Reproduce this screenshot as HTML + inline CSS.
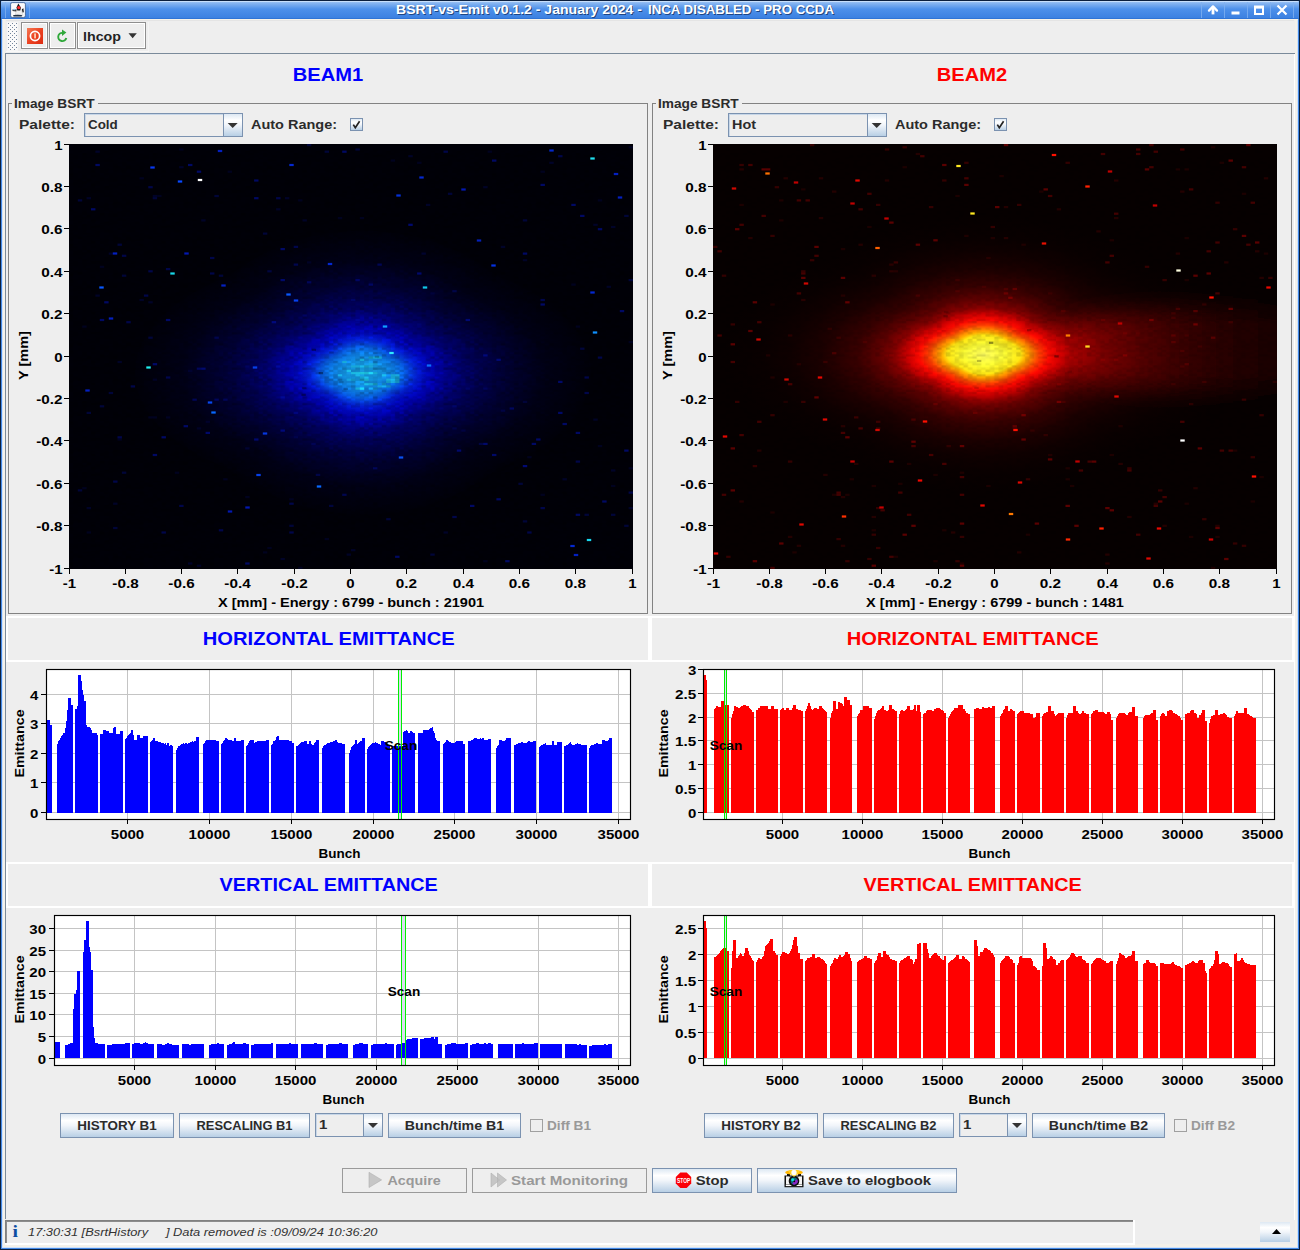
<!DOCTYPE html>
<html><head><meta charset="utf-8"><title>BSRT-vs-Emit</title><style>html,body{margin:0;padding:0;background:#eeeeee;font-family:"Liberation Sans",sans-serif;}body{width:1300px;height:1250px;position:relative;}#app{position:absolute;left:0;top:0;width:1300px;height:1250px;z-index:5;}</style></head><body><svg width="1300" height="1250" viewBox="0 0 1300 1250" font-family="'Liberation Sans', sans-serif" id="app"><defs><linearGradient id="gTitle" x1="0" y1="0" x2="0" y2="1">
<stop offset="0" stop-color="#a9cbf5"/><stop offset="0.12" stop-color="#86b5f1"/><stop offset="0.45" stop-color="#4d90ea"/><stop offset="1" stop-color="#3a7fe0"/></linearGradient><linearGradient id="gBtn" x1="0" y1="0" x2="0" y2="1">
<stop offset="0" stop-color="#dde8f3"/><stop offset="0.28" stop-color="#ffffff"/><stop offset="0.5" stop-color="#f1f5fa"/><stop offset="1" stop-color="#b8cfe5"/></linearGradient><pattern id="pGrip" x="8" y="23" width="4" height="4" patternUnits="userSpaceOnUse">
<rect x="0" y="0" width="4" height="4" fill="#fafafa"/><rect x="0" y="0" width="1" height="1" fill="#73849a"/><rect x="2" y="2" width="1" height="1" fill="#73849a"/></pattern><linearGradient id="gPow" x1="0" y1="0" x2="1" y2="1"><stop offset="0" stop-color="#f47a55"/><stop offset="0.5" stop-color="#ec4322"/><stop offset="1" stop-color="#dc2a10"/></linearGradient><radialGradient id="gCold"><stop offset="0" stop-color="#1ab4ff"/><stop offset="0.08" stop-color="#15a6ff"/>
<stop offset="0.14" stop-color="#0e8aff"/><stop offset="0.18" stop-color="#086aff"/><stop offset="0.21" stop-color="#0442fc"/>
<stop offset="0.24" stop-color="#0220f0"/><stop offset="0.28" stop-color="#0008d8"/><stop offset="0.32" stop-color="#0000c0"/><stop offset="0.43" stop-color="#000078"/>
<stop offset="0.52" stop-color="#000056"/><stop offset="0.62" stop-color="#00003a"/><stop offset="0.8" stop-color="#000018"/><stop offset="1" stop-color="#00000a"/></radialGradient><radialGradient id="gHot"><stop offset="0" stop-color="#ffff60"/><stop offset="0.08" stop-color="#ffff34"/>
<stop offset="0.14" stop-color="#ffe814"/><stop offset="0.16" stop-color="#ffb000"/><stop offset="0.19" stop-color="#ff7000"/><stop offset="0.21" stop-color="#ff4000"/>
<stop offset="0.25" stop-color="#ff0800"/><stop offset="0.29" stop-color="#d00000"/><stop offset="0.34" stop-color="#880000"/><stop offset="0.40" stop-color="#5e0000"/>
<stop offset="0.49" stop-color="#380000"/><stop offset="0.62" stop-color="#1c0000"/><stop offset="0.74" stop-color="#0f0000"/><stop offset="0.85" stop-color="#090000"/><stop offset="1" stop-color="#060000"/></radialGradient><linearGradient id="gTail" x1="0" x2="1" y1="0" y2="0"><stop offset="0" stop-color="#000"/><stop offset="0.125" stop-color="#520000"/><stop offset="0.215" stop-color="#480000"/>
<stop offset="0.32" stop-color="#3e0000"/><stop offset="0.45" stop-color="#2e0000"/><stop offset="0.6" stop-color="#200000"/><stop offset="0.74" stop-color="#150000"/><stop offset="1" stop-color="#0c0000"/></linearGradient><filter id="fBlur" x="-20%" y="-100%" width="140%" height="300%"><feGaussianBlur stdDeviation="7 11"/></filter><pattern id="pNoise" x="69" y="144" width="70.5000" height="35.4167" patternUnits="userSpaceOnUse"><g fill="#000"><rect x="0.000" y="0.000" width="4.426" height="2.234" opacity="0.05"/><rect x="4.406" y="0.000" width="4.426" height="2.234" opacity="0.07"/><rect x="8.812" y="0.000" width="4.426" height="2.234" opacity="0.14"/><rect x="17.625" y="0.000" width="4.426" height="2.234" opacity="0.11"/><rect x="22.031" y="0.000" width="4.426" height="2.234" opacity="0.03"/><rect x="39.656" y="0.000" width="4.426" height="2.234" opacity="0.07"/><rect x="44.062" y="0.000" width="4.426" height="2.234" opacity="0.11"/><rect x="48.469" y="0.000" width="4.426" height="2.234" opacity="0.03"/><rect x="52.875" y="0.000" width="4.426" height="2.234" opacity="0.09"/><rect x="57.281" y="0.000" width="4.426" height="2.234" opacity="0.14"/><rect x="66.094" y="0.000" width="4.426" height="2.234" opacity="0.03"/><rect x="4.406" y="2.214" width="4.426" height="2.234" opacity="0.03"/><rect x="8.812" y="2.214" width="4.426" height="2.234" opacity="0.09"/><rect x="13.219" y="2.214" width="4.426" height="2.234" opacity="0.05"/><rect x="22.031" y="2.214" width="4.426" height="2.234" opacity="0.09"/><rect x="39.656" y="2.214" width="4.426" height="2.234" opacity="0.11"/><rect x="61.688" y="2.214" width="4.426" height="2.234" opacity="0.03"/><rect x="66.094" y="2.214" width="4.426" height="2.234" opacity="0.03"/><rect x="8.812" y="4.427" width="4.426" height="2.234" opacity="0.05"/><rect x="13.219" y="4.427" width="4.426" height="2.234" opacity="0.07"/><rect x="17.625" y="4.427" width="4.426" height="2.234" opacity="0.03"/><rect x="22.031" y="4.427" width="4.426" height="2.234" opacity="0.14"/><rect x="26.438" y="4.427" width="4.426" height="2.234" opacity="0.03"/><rect x="35.250" y="4.427" width="4.426" height="2.234" opacity="0.03"/><rect x="39.656" y="4.427" width="4.426" height="2.234" opacity="0.09"/><rect x="44.062" y="4.427" width="4.426" height="2.234" opacity="0.05"/><rect x="52.875" y="4.427" width="4.426" height="2.234" opacity="0.07"/><rect x="57.281" y="4.427" width="4.426" height="2.234" opacity="0.09"/><rect x="0.000" y="6.641" width="4.426" height="2.234" opacity="0.05"/><rect x="8.812" y="6.641" width="4.426" height="2.234" opacity="0.07"/><rect x="13.219" y="6.641" width="4.426" height="2.234" opacity="0.05"/><rect x="22.031" y="6.641" width="4.426" height="2.234" opacity="0.07"/><rect x="30.844" y="6.641" width="4.426" height="2.234" opacity="0.05"/><rect x="35.250" y="6.641" width="4.426" height="2.234" opacity="0.07"/><rect x="39.656" y="6.641" width="4.426" height="2.234" opacity="0.05"/><rect x="44.062" y="6.641" width="4.426" height="2.234" opacity="0.11"/><rect x="48.469" y="6.641" width="4.426" height="2.234" opacity="0.07"/><rect x="57.281" y="6.641" width="4.426" height="2.234" opacity="0.11"/><rect x="61.688" y="6.641" width="4.426" height="2.234" opacity="0.11"/><rect x="4.406" y="8.854" width="4.426" height="2.234" opacity="0.05"/><rect x="13.219" y="8.854" width="4.426" height="2.234" opacity="0.07"/><rect x="17.625" y="8.854" width="4.426" height="2.234" opacity="0.09"/><rect x="26.438" y="8.854" width="4.426" height="2.234" opacity="0.14"/><rect x="30.844" y="8.854" width="4.426" height="2.234" opacity="0.09"/><rect x="35.250" y="8.854" width="4.426" height="2.234" opacity="0.07"/><rect x="39.656" y="8.854" width="4.426" height="2.234" opacity="0.09"/><rect x="48.469" y="8.854" width="4.426" height="2.234" opacity="0.11"/><rect x="61.688" y="8.854" width="4.426" height="2.234" opacity="0.03"/><rect x="0.000" y="11.068" width="4.426" height="2.234" opacity="0.03"/><rect x="4.406" y="11.068" width="4.426" height="2.234" opacity="0.11"/><rect x="8.812" y="11.068" width="4.426" height="2.234" opacity="0.07"/><rect x="13.219" y="11.068" width="4.426" height="2.234" opacity="0.14"/><rect x="17.625" y="11.068" width="4.426" height="2.234" opacity="0.07"/><rect x="22.031" y="11.068" width="4.426" height="2.234" opacity="0.14"/><rect x="26.438" y="11.068" width="4.426" height="2.234" opacity="0.05"/><rect x="30.844" y="11.068" width="4.426" height="2.234" opacity="0.11"/><rect x="39.656" y="11.068" width="4.426" height="2.234" opacity="0.07"/><rect x="44.062" y="11.068" width="4.426" height="2.234" opacity="0.05"/><rect x="52.875" y="11.068" width="4.426" height="2.234" opacity="0.09"/><rect x="61.688" y="11.068" width="4.426" height="2.234" opacity="0.03"/><rect x="66.094" y="11.068" width="4.426" height="2.234" opacity="0.07"/><rect x="0.000" y="13.281" width="4.426" height="2.234" opacity="0.14"/><rect x="4.406" y="13.281" width="4.426" height="2.234" opacity="0.07"/><rect x="13.219" y="13.281" width="4.426" height="2.234" opacity="0.07"/><rect x="17.625" y="13.281" width="4.426" height="2.234" opacity="0.05"/><rect x="22.031" y="13.281" width="4.426" height="2.234" opacity="0.14"/><rect x="30.844" y="13.281" width="4.426" height="2.234" opacity="0.05"/><rect x="35.250" y="13.281" width="4.426" height="2.234" opacity="0.07"/><rect x="39.656" y="13.281" width="4.426" height="2.234" opacity="0.05"/><rect x="57.281" y="13.281" width="4.426" height="2.234" opacity="0.05"/><rect x="61.688" y="13.281" width="4.426" height="2.234" opacity="0.11"/><rect x="8.812" y="15.495" width="4.426" height="2.234" opacity="0.14"/><rect x="13.219" y="15.495" width="4.426" height="2.234" opacity="0.09"/><rect x="22.031" y="15.495" width="4.426" height="2.234" opacity="0.03"/><rect x="26.438" y="15.495" width="4.426" height="2.234" opacity="0.07"/><rect x="30.844" y="15.495" width="4.426" height="2.234" opacity="0.05"/><rect x="35.250" y="15.495" width="4.426" height="2.234" opacity="0.11"/><rect x="39.656" y="15.495" width="4.426" height="2.234" opacity="0.09"/><rect x="57.281" y="15.495" width="4.426" height="2.234" opacity="0.11"/><rect x="61.688" y="15.495" width="4.426" height="2.234" opacity="0.07"/><rect x="66.094" y="15.495" width="4.426" height="2.234" opacity="0.03"/><rect x="8.812" y="17.708" width="4.426" height="2.234" opacity="0.09"/><rect x="22.031" y="17.708" width="4.426" height="2.234" opacity="0.09"/><rect x="26.438" y="17.708" width="4.426" height="2.234" opacity="0.07"/><rect x="39.656" y="17.708" width="4.426" height="2.234" opacity="0.09"/><rect x="44.062" y="17.708" width="4.426" height="2.234" opacity="0.05"/><rect x="52.875" y="17.708" width="4.426" height="2.234" opacity="0.11"/><rect x="61.688" y="17.708" width="4.426" height="2.234" opacity="0.14"/><rect x="66.094" y="17.708" width="4.426" height="2.234" opacity="0.11"/><rect x="0.000" y="19.922" width="4.426" height="2.234" opacity="0.11"/><rect x="4.406" y="19.922" width="4.426" height="2.234" opacity="0.07"/><rect x="8.812" y="19.922" width="4.426" height="2.234" opacity="0.11"/><rect x="13.219" y="19.922" width="4.426" height="2.234" opacity="0.05"/><rect x="17.625" y="19.922" width="4.426" height="2.234" opacity="0.05"/><rect x="22.031" y="19.922" width="4.426" height="2.234" opacity="0.11"/><rect x="26.438" y="19.922" width="4.426" height="2.234" opacity="0.09"/><rect x="39.656" y="19.922" width="4.426" height="2.234" opacity="0.09"/><rect x="44.062" y="19.922" width="4.426" height="2.234" opacity="0.14"/><rect x="52.875" y="19.922" width="4.426" height="2.234" opacity="0.11"/><rect x="57.281" y="19.922" width="4.426" height="2.234" opacity="0.07"/><rect x="0.000" y="22.135" width="4.426" height="2.234" opacity="0.11"/><rect x="4.406" y="22.135" width="4.426" height="2.234" opacity="0.05"/><rect x="8.812" y="22.135" width="4.426" height="2.234" opacity="0.14"/><rect x="13.219" y="22.135" width="4.426" height="2.234" opacity="0.14"/><rect x="17.625" y="22.135" width="4.426" height="2.234" opacity="0.14"/><rect x="22.031" y="22.135" width="4.426" height="2.234" opacity="0.07"/><rect x="30.844" y="22.135" width="4.426" height="2.234" opacity="0.07"/><rect x="39.656" y="22.135" width="4.426" height="2.234" opacity="0.05"/><rect x="44.062" y="22.135" width="4.426" height="2.234" opacity="0.07"/><rect x="48.469" y="22.135" width="4.426" height="2.234" opacity="0.14"/><rect x="52.875" y="22.135" width="4.426" height="2.234" opacity="0.05"/><rect x="57.281" y="22.135" width="4.426" height="2.234" opacity="0.11"/><rect x="61.688" y="22.135" width="4.426" height="2.234" opacity="0.05"/><rect x="66.094" y="22.135" width="4.426" height="2.234" opacity="0.05"/><rect x="0.000" y="24.349" width="4.426" height="2.234" opacity="0.07"/><rect x="13.219" y="24.349" width="4.426" height="2.234" opacity="0.11"/><rect x="17.625" y="24.349" width="4.426" height="2.234" opacity="0.14"/><rect x="22.031" y="24.349" width="4.426" height="2.234" opacity="0.05"/><rect x="26.438" y="24.349" width="4.426" height="2.234" opacity="0.07"/><rect x="30.844" y="24.349" width="4.426" height="2.234" opacity="0.05"/><rect x="35.250" y="24.349" width="4.426" height="2.234" opacity="0.11"/><rect x="39.656" y="24.349" width="4.426" height="2.234" opacity="0.05"/><rect x="44.062" y="24.349" width="4.426" height="2.234" opacity="0.14"/><rect x="48.469" y="24.349" width="4.426" height="2.234" opacity="0.07"/><rect x="52.875" y="24.349" width="4.426" height="2.234" opacity="0.07"/><rect x="57.281" y="24.349" width="4.426" height="2.234" opacity="0.05"/><rect x="61.688" y="24.349" width="4.426" height="2.234" opacity="0.07"/><rect x="66.094" y="24.349" width="4.426" height="2.234" opacity="0.09"/><rect x="0.000" y="26.562" width="4.426" height="2.234" opacity="0.07"/><rect x="8.812" y="26.562" width="4.426" height="2.234" opacity="0.11"/><rect x="13.219" y="26.562" width="4.426" height="2.234" opacity="0.07"/><rect x="17.625" y="26.562" width="4.426" height="2.234" opacity="0.07"/><rect x="22.031" y="26.562" width="4.426" height="2.234" opacity="0.14"/><rect x="30.844" y="26.562" width="4.426" height="2.234" opacity="0.14"/><rect x="39.656" y="26.562" width="4.426" height="2.234" opacity="0.03"/><rect x="44.062" y="26.562" width="4.426" height="2.234" opacity="0.07"/><rect x="48.469" y="26.562" width="4.426" height="2.234" opacity="0.11"/><rect x="52.875" y="26.562" width="4.426" height="2.234" opacity="0.05"/><rect x="61.688" y="26.562" width="4.426" height="2.234" opacity="0.09"/><rect x="0.000" y="28.776" width="4.426" height="2.234" opacity="0.14"/><rect x="4.406" y="28.776" width="4.426" height="2.234" opacity="0.09"/><rect x="8.812" y="28.776" width="4.426" height="2.234" opacity="0.05"/><rect x="13.219" y="28.776" width="4.426" height="2.234" opacity="0.14"/><rect x="17.625" y="28.776" width="4.426" height="2.234" opacity="0.05"/><rect x="26.438" y="28.776" width="4.426" height="2.234" opacity="0.03"/><rect x="35.250" y="28.776" width="4.426" height="2.234" opacity="0.11"/><rect x="44.062" y="28.776" width="4.426" height="2.234" opacity="0.03"/><rect x="57.281" y="28.776" width="4.426" height="2.234" opacity="0.11"/><rect x="61.688" y="28.776" width="4.426" height="2.234" opacity="0.03"/><rect x="13.219" y="30.990" width="4.426" height="2.234" opacity="0.07"/><rect x="22.031" y="30.990" width="4.426" height="2.234" opacity="0.11"/><rect x="26.438" y="30.990" width="4.426" height="2.234" opacity="0.03"/><rect x="30.844" y="30.990" width="4.426" height="2.234" opacity="0.14"/><rect x="39.656" y="30.990" width="4.426" height="2.234" opacity="0.09"/><rect x="44.062" y="30.990" width="4.426" height="2.234" opacity="0.11"/><rect x="48.469" y="30.990" width="4.426" height="2.234" opacity="0.07"/><rect x="52.875" y="30.990" width="4.426" height="2.234" opacity="0.09"/><rect x="61.688" y="30.990" width="4.426" height="2.234" opacity="0.03"/><rect x="66.094" y="30.990" width="4.426" height="2.234" opacity="0.03"/><rect x="0.000" y="33.203" width="4.426" height="2.234" opacity="0.07"/><rect x="8.812" y="33.203" width="4.426" height="2.234" opacity="0.07"/><rect x="13.219" y="33.203" width="4.426" height="2.234" opacity="0.09"/><rect x="17.625" y="33.203" width="4.426" height="2.234" opacity="0.05"/><rect x="22.031" y="33.203" width="4.426" height="2.234" opacity="0.09"/><rect x="30.844" y="33.203" width="4.426" height="2.234" opacity="0.14"/><rect x="35.250" y="33.203" width="4.426" height="2.234" opacity="0.07"/><rect x="44.062" y="33.203" width="4.426" height="2.234" opacity="0.14"/><rect x="48.469" y="33.203" width="4.426" height="2.234" opacity="0.05"/><rect x="57.281" y="33.203" width="4.426" height="2.234" opacity="0.05"/><rect x="61.688" y="33.203" width="4.426" height="2.234" opacity="0.14"/><rect x="66.094" y="33.203" width="4.426" height="2.234" opacity="0.14"/></g></pattern><clipPath id="cL"><rect x="69" y="144" width="564" height="425"/></clipPath><clipPath id="cR"><rect x="713" y="144" width="564" height="425"/></clipPath></defs><rect x="0" y="0" width="1300" height="1250" fill="#0b1f3d" />
<rect x="1" y="1" width="1298" height="1248" fill="#4288e6" />
<rect x="2" y="19" width="1296" height="1229" fill="#cfe2fa" />
<rect x="3" y="19" width="1294" height="1228" fill="#f4f1ea" />
<rect x="5" y="20" width="1290" height="1224" fill="#eeeeee" />
<rect x="1" y="1" width="1298" height="18" fill="url(#gTitle)" />
<rect x="0" y="0" width="1300" height="1" fill="#0b1f3d" />
<rect x="2" y="1" width="1296" height="1" fill="#c8dffa" />
<rect x="1" y="18" width="1298" height="1" fill="#2f74d6" />
<rect x="2" y="19" width="1296" height="1" fill="#f6f2ea" />
<rect x="5" y="2" width="1" height="16" fill="#7fb0f0" opacity="0.8"/>
<rect x="29" y="2" width="1" height="16" fill="#7fb0f0" opacity="0.8"/>
<rect x="1201" y="2" width="1" height="16" fill="#7fb0f0" opacity="0.8"/>
<rect x="1224" y="2" width="1" height="16" fill="#7fb0f0" opacity="0.8"/>
<rect x="1247" y="2" width="1" height="16" fill="#7fb0f0" opacity="0.8"/>
<rect x="1270" y="2" width="1" height="16" fill="#7fb0f0" opacity="0.8"/>
<rect x="1293" y="2" width="1" height="16" fill="#7fb0f0" opacity="0.8"/>
<text x="397.00" y="15.00" font-size="12" font-weight="bold" fill="#1c3f7a" textLength="246.00" lengthAdjust="spacingAndGlyphs" opacity="0.9">BSRT-vs-Emit v0.1.2 - January 2024 -</text>
<text x="649.00" y="15.00" font-size="12" font-weight="bold" fill="#1c3f7a" textLength="186.00" lengthAdjust="spacingAndGlyphs" opacity="0.9">INCA DISABLED - PRO CCDA</text>
<text x="396.00" y="14.00" font-size="12" font-weight="bold" fill="#ffffff" textLength="246.00" lengthAdjust="spacingAndGlyphs" opacity="1">BSRT-vs-Emit v0.1.2 - January 2024 -</text>
<text x="648.00" y="14.00" font-size="12" font-weight="bold" fill="#ffffff" textLength="186.00" lengthAdjust="spacingAndGlyphs" opacity="1">INCA DISABLED - PRO CCDA</text>
<g transform="translate(11,3)"><rect x="-0.4" y="-0.4" width="14.8" height="14.8" rx="1.6" fill="#fbfbfb" stroke="#33598f" stroke-width="0.8"/><path d="M5.4 6.6 L10.2 6.6 L12.1 12.3 L4.3 12.3 Z" fill="#f0f0f0" stroke="#aaa" stroke-width="0.3"/><path d="M7.3 0.6 L9.9 4.4 L9.2 7.4 L6.3 7.4 L5.5 4.6 Z" fill="#151515"/><circle cx="7.8" cy="4.6" r="1.65" fill="#ff2c2c"/><path d="M10.9 6.2 L12.4 5.2 L12.8 9.2 L11.6 9.6 Z" fill="#151515"/><path d="M5.6 6.4 L1.8 5.9 L1.4 8 L5.2 8.4 Z" fill="#3a3a3a"/><ellipse cx="3.3" cy="6.5" rx="1.4" ry="0.8" fill="#8cc6fa"/><ellipse cx="6.6" cy="12.7" rx="4.6" ry="0.9" fill="#0e1e30" opacity="0.9"/></g>
<g fill="none" stroke="#fff" stroke-width="2" stroke-linecap="butt"><path d="M1213 14.4 V7.5" stroke-width="2.8"/><path d="M1209 10.6 L1213 6.4 L1217 10.6" stroke-width="2.3" stroke-linejoin="round" stroke-linecap="round"/><path d="M1231.5 13 H1239.5" stroke-width="3"/><path d="M1255 6.5 H1263 V14 H1255 Z" /><path d="M1255 7.3 H1263" stroke-width="2.6"/><path d="M1277.5 5.5 L1286.5 14.5 M1286.5 5.5 L1277.5 14.5" stroke-width="2.2"/></g>
<rect x="7" y="22" width="11" height="29" fill="#f6f6f6" />
<rect x="8" y="23" width="9" height="27" fill="url(#pGrip)" />
<rect x="6" y="20" width="1288" height="1" fill="#e4e4e4" />
<rect x="21" y="22" width="27" height="27" fill="#8e8e8e" />
<rect x="22" y="23" width="25" height="25" fill="#ffffff" />
<rect x="23" y="24" width="23" height="23" fill="#eeeeee" />
<rect x="49" y="22" width="27" height="27" fill="#8e8e8e" />
<rect x="50" y="23" width="25" height="25" fill="#ffffff" />
<rect x="51" y="24" width="23" height="23" fill="#eeeeee" />
<rect x="77" y="22" width="69" height="27" fill="#8e8e8e" />
<rect x="78" y="23" width="67" height="25" fill="#ffffff" />
<rect x="79" y="24" width="65" height="23" fill="#eeeeee" />
<rect x="6" y="51" width="143" height="1" fill="#f8f8f8" />
<rect x="148" y="22" width="1" height="29" fill="#f4f4f4" />
<rect x="27" y="28" width="16" height="16" fill="url(#gPow)" />
<circle cx="35" cy="36" r="4.6" fill="none" stroke="#fff" stroke-width="1.7"/>
<rect x="34.3" y="33.4" width="1.5" height="5" fill="#ffe9d0" />
<path d="M66.3 38 A4.1 4.1 0 1 1 62.6 32.9" fill="none" stroke="#2fa83a" stroke-width="1.9"/><path d="M62 29.6 L66.4 32.6 L62 35.9 Z" fill="#2fa83a"/>
<text x="83.00" y="41.00" font-size="13" font-weight="bold" fill="#222" textLength="38.00" lengthAdjust="spacingAndGlyphs" >lhcop</text>
<path d="M128.5 33.2 H136.8 L132.65 38.3 Z" fill="#333"/>
<rect x="5" y="53" width="1290" height="1" fill="#7a8a9a" />
<rect x="5" y="53" width="1" height="1166" fill="#7a8a9a" />
<rect x="1294" y="54" width="1" height="1166" fill="#ffffff" />
<text x="292.81" y="81.00" font-size="18" font-weight="bold" fill="#0000ff" textLength="70.38" lengthAdjust="spacingAndGlyphs" >BEAM1</text>
<text x="936.81" y="81.00" font-size="18" font-weight="bold" fill="#ff0000" textLength="70.38" lengthAdjust="spacingAndGlyphs" >BEAM2</text>
<rect x="8.5" y="103.5" width="639" height="510" fill="none" stroke="#828282"/>
<rect x="12" y="98" width="86" height="12" fill="#eeeeee" />
<text x="14.00" y="108.00" font-size="12" font-weight="bold" fill="#2b2b2b" textLength="80.65" lengthAdjust="spacingAndGlyphs" >Image BSRT</text>
<text x="19.00" y="129.00" font-size="12" font-weight="bold" fill="#2b2b2b" textLength="56.00" lengthAdjust="spacingAndGlyphs" >Palette:</text>
<rect x="84" y="113" width="159" height="24" fill="#7b92b0" />
<rect x="85" y="114" width="138" height="22" fill="#c8d7e8" />
<rect x="86" y="115" width="137" height="21" fill="#eeeeee" />
<rect x="224" y="114" width="18" height="22" fill="url(#gBtn)" />
<path d="M227.7 123 H237.7 L232.7 128 Z" fill="#333"/>
<text x="88.00" y="129.00" font-size="12" font-weight="bold" fill="#2b2b2b" textLength="29.75" lengthAdjust="spacingAndGlyphs" >Cold</text>
<text x="251.00" y="129.00" font-size="12" font-weight="bold" fill="#2b2b2b" textLength="86.00" lengthAdjust="spacingAndGlyphs" >Auto Range:</text>
<rect x="350" y="118" width="13" height="13" fill="#7b92b0" />
<rect x="351" y="119" width="11" height="11" fill="url(#gBtn)" />
<path d="M353.3 124.6 L355.3 127.6 L359.6 121.2" fill="none" stroke="#222" stroke-width="1.7"/>
<rect x="69" y="569" width="1" height="5" fill="#000" />
<text x="62.83" y="588.00" font-size="12" font-weight="bold" fill="#000" textLength="13.33" lengthAdjust="spacingAndGlyphs" >-1</text>
<rect x="64" y="568" width="5" height="1" fill="#000" />
<text x="49.17" y="573.50" font-size="12" font-weight="bold" fill="#000" textLength="13.33" lengthAdjust="spacingAndGlyphs" >-1</text>
<rect x="125" y="569" width="1" height="5" fill="#000" />
<text x="112.38" y="588.00" font-size="12" font-weight="bold" fill="#000" textLength="26.24" lengthAdjust="spacingAndGlyphs" >-0.8</text>
<rect x="64" y="525" width="5" height="1" fill="#000" />
<text x="36.26" y="530.50" font-size="12" font-weight="bold" fill="#000" textLength="26.24" lengthAdjust="spacingAndGlyphs" >-0.8</text>
<rect x="181" y="569" width="1" height="5" fill="#000" />
<text x="168.38" y="588.00" font-size="12" font-weight="bold" fill="#000" textLength="26.24" lengthAdjust="spacingAndGlyphs" >-0.6</text>
<rect x="64" y="483" width="5" height="1" fill="#000" />
<text x="36.26" y="488.50" font-size="12" font-weight="bold" fill="#000" textLength="26.24" lengthAdjust="spacingAndGlyphs" >-0.6</text>
<rect x="237" y="569" width="1" height="5" fill="#000" />
<text x="224.38" y="588.00" font-size="12" font-weight="bold" fill="#000" textLength="26.24" lengthAdjust="spacingAndGlyphs" >-0.4</text>
<rect x="64" y="440" width="5" height="1" fill="#000" />
<text x="36.26" y="445.50" font-size="12" font-weight="bold" fill="#000" textLength="26.24" lengthAdjust="spacingAndGlyphs" >-0.4</text>
<rect x="294" y="569" width="1" height="5" fill="#000" />
<text x="281.38" y="588.00" font-size="12" font-weight="bold" fill="#000" textLength="26.24" lengthAdjust="spacingAndGlyphs" >-0.2</text>
<rect x="64" y="398" width="5" height="1" fill="#000" />
<text x="36.26" y="403.50" font-size="12" font-weight="bold" fill="#000" textLength="26.24" lengthAdjust="spacingAndGlyphs" >-0.2</text>
<rect x="350" y="569" width="1" height="5" fill="#000" />
<text x="346.32" y="588.00" font-size="12" font-weight="bold" fill="#000" textLength="8.35" lengthAdjust="spacingAndGlyphs" >0</text>
<rect x="64" y="356" width="5" height="1" fill="#000" />
<text x="54.15" y="361.50" font-size="12" font-weight="bold" fill="#000" textLength="8.35" lengthAdjust="spacingAndGlyphs" >0</text>
<rect x="406" y="569" width="1" height="5" fill="#000" />
<text x="395.87" y="588.00" font-size="12" font-weight="bold" fill="#000" textLength="21.26" lengthAdjust="spacingAndGlyphs" >0.2</text>
<rect x="64" y="313" width="5" height="1" fill="#000" />
<text x="41.24" y="318.50" font-size="12" font-weight="bold" fill="#000" textLength="21.26" lengthAdjust="spacingAndGlyphs" >0.2</text>
<rect x="463" y="569" width="1" height="5" fill="#000" />
<text x="452.87" y="588.00" font-size="12" font-weight="bold" fill="#000" textLength="21.26" lengthAdjust="spacingAndGlyphs" >0.4</text>
<rect x="64" y="271" width="5" height="1" fill="#000" />
<text x="41.24" y="276.50" font-size="12" font-weight="bold" fill="#000" textLength="21.26" lengthAdjust="spacingAndGlyphs" >0.4</text>
<rect x="519" y="569" width="1" height="5" fill="#000" />
<text x="508.87" y="588.00" font-size="12" font-weight="bold" fill="#000" textLength="21.26" lengthAdjust="spacingAndGlyphs" >0.6</text>
<rect x="64" y="228" width="5" height="1" fill="#000" />
<text x="41.24" y="233.50" font-size="12" font-weight="bold" fill="#000" textLength="21.26" lengthAdjust="spacingAndGlyphs" >0.6</text>
<rect x="575" y="569" width="1" height="5" fill="#000" />
<text x="564.87" y="588.00" font-size="12" font-weight="bold" fill="#000" textLength="21.26" lengthAdjust="spacingAndGlyphs" >0.8</text>
<rect x="64" y="186" width="5" height="1" fill="#000" />
<text x="41.24" y="191.50" font-size="12" font-weight="bold" fill="#000" textLength="21.26" lengthAdjust="spacingAndGlyphs" >0.8</text>
<rect x="632" y="569" width="1" height="5" fill="#000" />
<text x="628.33" y="588.00" font-size="12" font-weight="bold" fill="#000" textLength="8.35" lengthAdjust="spacingAndGlyphs" >1</text>
<rect x="64" y="144" width="5" height="1" fill="#000" />
<text x="54.15" y="149.50" font-size="12" font-weight="bold" fill="#000" textLength="8.35" lengthAdjust="spacingAndGlyphs" >1</text>
<text x="217.96" y="607.00" font-size="12" font-weight="bold" fill="#000" textLength="266.08" lengthAdjust="spacingAndGlyphs" >X [mm] - Energy : 6799 - bunch : 21901</text>
<g transform="translate(28,355.5) rotate(-90)">
<text x="-24.42" y="0.00" font-size="12" font-weight="bold" fill="#000" textLength="48.84" lengthAdjust="spacingAndGlyphs" >Y [mm]</text>
</g>
<rect x="652.5" y="103.5" width="639" height="510" fill="none" stroke="#828282"/>
<rect x="656" y="98" width="86" height="12" fill="#eeeeee" />
<text x="658.00" y="108.00" font-size="12" font-weight="bold" fill="#2b2b2b" textLength="80.65" lengthAdjust="spacingAndGlyphs" >Image BSRT</text>
<text x="663.00" y="129.00" font-size="12" font-weight="bold" fill="#2b2b2b" textLength="56.00" lengthAdjust="spacingAndGlyphs" >Palette:</text>
<rect x="728" y="113" width="159" height="24" fill="#7b92b0" />
<rect x="729" y="114" width="138" height="22" fill="#c8d7e8" />
<rect x="730" y="115" width="137" height="21" fill="#eeeeee" />
<rect x="868" y="114" width="18" height="22" fill="url(#gBtn)" />
<path d="M871.7 123 H881.7 L876.7 128 Z" fill="#333"/>
<text x="732.00" y="129.00" font-size="12" font-weight="bold" fill="#2b2b2b" textLength="24.02" lengthAdjust="spacingAndGlyphs" >Hot</text>
<text x="895.00" y="129.00" font-size="12" font-weight="bold" fill="#2b2b2b" textLength="86.00" lengthAdjust="spacingAndGlyphs" >Auto Range:</text>
<rect x="994" y="118" width="13" height="13" fill="#7b92b0" />
<rect x="995" y="119" width="11" height="11" fill="url(#gBtn)" />
<path d="M997.3 124.6 L999.3 127.6 L1003.6 121.2" fill="none" stroke="#222" stroke-width="1.7"/>
<rect x="713" y="569" width="1" height="5" fill="#000" />
<text x="706.83" y="588.00" font-size="12" font-weight="bold" fill="#000" textLength="13.33" lengthAdjust="spacingAndGlyphs" >-1</text>
<rect x="708" y="568" width="5" height="1" fill="#000" />
<text x="693.17" y="573.50" font-size="12" font-weight="bold" fill="#000" textLength="13.33" lengthAdjust="spacingAndGlyphs" >-1</text>
<rect x="769" y="569" width="1" height="5" fill="#000" />
<text x="756.38" y="588.00" font-size="12" font-weight="bold" fill="#000" textLength="26.24" lengthAdjust="spacingAndGlyphs" >-0.8</text>
<rect x="708" y="525" width="5" height="1" fill="#000" />
<text x="680.26" y="530.50" font-size="12" font-weight="bold" fill="#000" textLength="26.24" lengthAdjust="spacingAndGlyphs" >-0.8</text>
<rect x="825" y="569" width="1" height="5" fill="#000" />
<text x="812.38" y="588.00" font-size="12" font-weight="bold" fill="#000" textLength="26.24" lengthAdjust="spacingAndGlyphs" >-0.6</text>
<rect x="708" y="483" width="5" height="1" fill="#000" />
<text x="680.26" y="488.50" font-size="12" font-weight="bold" fill="#000" textLength="26.24" lengthAdjust="spacingAndGlyphs" >-0.6</text>
<rect x="881" y="569" width="1" height="5" fill="#000" />
<text x="868.38" y="588.00" font-size="12" font-weight="bold" fill="#000" textLength="26.24" lengthAdjust="spacingAndGlyphs" >-0.4</text>
<rect x="708" y="440" width="5" height="1" fill="#000" />
<text x="680.26" y="445.50" font-size="12" font-weight="bold" fill="#000" textLength="26.24" lengthAdjust="spacingAndGlyphs" >-0.4</text>
<rect x="938" y="569" width="1" height="5" fill="#000" />
<text x="925.38" y="588.00" font-size="12" font-weight="bold" fill="#000" textLength="26.24" lengthAdjust="spacingAndGlyphs" >-0.2</text>
<rect x="708" y="398" width="5" height="1" fill="#000" />
<text x="680.26" y="403.50" font-size="12" font-weight="bold" fill="#000" textLength="26.24" lengthAdjust="spacingAndGlyphs" >-0.2</text>
<rect x="994" y="569" width="1" height="5" fill="#000" />
<text x="990.33" y="588.00" font-size="12" font-weight="bold" fill="#000" textLength="8.35" lengthAdjust="spacingAndGlyphs" >0</text>
<rect x="708" y="356" width="5" height="1" fill="#000" />
<text x="698.15" y="361.50" font-size="12" font-weight="bold" fill="#000" textLength="8.35" lengthAdjust="spacingAndGlyphs" >0</text>
<rect x="1050" y="569" width="1" height="5" fill="#000" />
<text x="1039.87" y="588.00" font-size="12" font-weight="bold" fill="#000" textLength="21.26" lengthAdjust="spacingAndGlyphs" >0.2</text>
<rect x="708" y="313" width="5" height="1" fill="#000" />
<text x="685.24" y="318.50" font-size="12" font-weight="bold" fill="#000" textLength="21.26" lengthAdjust="spacingAndGlyphs" >0.2</text>
<rect x="1107" y="569" width="1" height="5" fill="#000" />
<text x="1096.87" y="588.00" font-size="12" font-weight="bold" fill="#000" textLength="21.26" lengthAdjust="spacingAndGlyphs" >0.4</text>
<rect x="708" y="271" width="5" height="1" fill="#000" />
<text x="685.24" y="276.50" font-size="12" font-weight="bold" fill="#000" textLength="21.26" lengthAdjust="spacingAndGlyphs" >0.4</text>
<rect x="1163" y="569" width="1" height="5" fill="#000" />
<text x="1152.87" y="588.00" font-size="12" font-weight="bold" fill="#000" textLength="21.26" lengthAdjust="spacingAndGlyphs" >0.6</text>
<rect x="708" y="228" width="5" height="1" fill="#000" />
<text x="685.24" y="233.50" font-size="12" font-weight="bold" fill="#000" textLength="21.26" lengthAdjust="spacingAndGlyphs" >0.6</text>
<rect x="1219" y="569" width="1" height="5" fill="#000" />
<text x="1208.87" y="588.00" font-size="12" font-weight="bold" fill="#000" textLength="21.26" lengthAdjust="spacingAndGlyphs" >0.8</text>
<rect x="708" y="186" width="5" height="1" fill="#000" />
<text x="685.24" y="191.50" font-size="12" font-weight="bold" fill="#000" textLength="21.26" lengthAdjust="spacingAndGlyphs" >0.8</text>
<rect x="1276" y="569" width="1" height="5" fill="#000" />
<text x="1272.33" y="588.00" font-size="12" font-weight="bold" fill="#000" textLength="8.35" lengthAdjust="spacingAndGlyphs" >1</text>
<rect x="708" y="144" width="5" height="1" fill="#000" />
<text x="698.15" y="149.50" font-size="12" font-weight="bold" fill="#000" textLength="8.35" lengthAdjust="spacingAndGlyphs" >1</text>
<text x="866.13" y="607.00" font-size="12" font-weight="bold" fill="#000" textLength="257.73" lengthAdjust="spacingAndGlyphs" >X [mm] - Energy : 6799 - bunch : 1481</text>
<g transform="translate(672,355.5) rotate(-90)">
<text x="-24.42" y="0.00" font-size="12" font-weight="bold" fill="#000" textLength="48.84" lengthAdjust="spacingAndGlyphs" >Y [mm]</text>
</g>
<g clip-path="url(#cL)">
<rect x="69" y="144" width="564" height="425" fill="#000008" />
<ellipse cx="363" cy="372.5" rx="228" ry="119.3" fill="url(#gCold)"/>
<ellipse cx="363" cy="372.5" rx="182.4" ry="142" fill="url(#gCold)" style="mix-blend-mode:lighten"/>
<rect x="368.6" y="363.1" width="8.81" height="2.21" fill="#22e4ff" opacity="0.35"/>
<rect x="355.4" y="387.5" width="8.81" height="2.21" fill="#22e4ff" opacity="0.65"/>
<rect x="351.0" y="365.4" width="8.81" height="2.21" fill="#22e4ff" opacity="0.5"/>
<rect x="377.4" y="385.3" width="13.22" height="2.21" fill="#22e4ff" opacity="0.5"/>
<rect x="359.8" y="376.4" width="8.81" height="4.43" fill="#22e4ff" opacity="0.5"/>
<rect x="364.2" y="378.6" width="4.41" height="2.21" fill="#22e4ff" opacity="0.65"/>
<rect x="346.6" y="369.8" width="4.41" height="2.21" fill="#22e4ff" opacity="0.65"/>
<rect x="359.8" y="358.7" width="4.41" height="2.21" fill="#22e4ff" opacity="0.65"/>
<rect x="355.4" y="374.2" width="4.41" height="2.21" fill="#22e4ff" opacity="0.5"/>
<rect x="342.2" y="360.9" width="4.41" height="2.21" fill="#22e4ff" opacity="0.65"/>
<rect x="386.2" y="378.6" width="13.22" height="4.43" fill="#22e4ff" opacity="0.65"/>
<rect x="351.0" y="372.0" width="13.22" height="2.21" fill="#22e4ff" opacity="0.65"/>
<rect x="381.8" y="383.1" width="4.41" height="2.21" fill="#22e4ff" opacity="0.35"/>
<rect x="359.8" y="372.0" width="8.81" height="2.21" fill="#22e4ff" opacity="0.35"/>
<rect x="364.2" y="383.1" width="13.22" height="2.21" fill="#22e4ff" opacity="0.65"/>
<rect x="337.8" y="374.2" width="4.41" height="2.21" fill="#22e4ff" opacity="0.5"/>
<rect x="359.8" y="372.0" width="13.22" height="2.21" fill="#22e4ff" opacity="0.5"/>
<rect x="359.8" y="372.0" width="13.22" height="2.21" fill="#22e4ff" opacity="0.35"/>
<rect x="359.8" y="365.4" width="13.22" height="2.21" fill="#22e4ff" opacity="0.5"/>
<rect x="368.6" y="372.0" width="8.81" height="2.21" fill="#22e4ff" opacity="0.5"/>
<rect x="368.6" y="387.5" width="8.81" height="2.21" fill="#22e4ff" opacity="0.35"/>
<rect x="390.7" y="374.2" width="8.81" height="4.43" fill="#22e4ff" opacity="0.65"/>
<rect x="368.6" y="356.5" width="13.22" height="2.21" fill="#22e4ff" opacity="0.65"/>
<rect x="359.8" y="387.5" width="4.41" height="2.21" fill="#22e4ff" opacity="0.65"/>
<rect x="346.6" y="378.6" width="8.81" height="2.21" fill="#22e4ff" opacity="0.35"/>
<rect x="381.8" y="374.2" width="4.41" height="2.21" fill="#22e4ff" opacity="0.65"/>
<rect x="69" y="144" width="564" height="425" fill="url(#pNoise)"/>
<rect x="9" y="100" width="700" height="520" fill="url(#pNoise)" transform="translate(30.844,13.281)"/>
<rect x="9" y="100" width="700" height="520" fill="url(#pNoise)" transform="translate(13.219,24.349)"/>
<rect x="575.7" y="460.5" width="4.41" height="2.21" fill="#0010b0" opacity="0.4"/><rect x="575.7" y="431.8" width="4.41" height="2.21" fill="#0010b0" opacity="0.55"/><rect x="280.5" y="248.0" width="4.41" height="2.21" fill="#0010b0" opacity="0.55"/><rect x="602.2" y="500.4" width="4.41" height="2.21" fill="#0010b0" opacity="0.55"/><rect x="276.1" y="197.1" width="4.41" height="2.21" fill="#0010b0" opacity="0.4"/><rect x="408.3" y="223.7" width="4.41" height="2.21" fill="#0010b0" opacity="0.15"/><rect x="113.1" y="480.5" width="4.41" height="2.21" fill="#0010b0" opacity="0.4"/><rect x="575.7" y="513.7" width="4.41" height="2.21" fill="#0010b0" opacity="0.55"/><rect x="245.2" y="496.0" width="4.41" height="2.21" fill="#0010b0" opacity="0.15"/><rect x="139.5" y="177.2" width="4.41" height="2.21" fill="#0010b0" opacity="0.15"/><rect x="280.5" y="279.0" width="4.41" height="2.21" fill="#0010b0" opacity="0.55"/><rect x="99.8" y="405.2" width="4.41" height="2.21" fill="#0010b0" opacity="0.3"/><rect x="562.5" y="478.2" width="4.41" height="2.21" fill="#0010b0" opacity="0.2"/><rect x="329.0" y="504.8" width="4.41" height="2.21" fill="#0010b0" opacity="0.3"/><rect x="628.6" y="146.2" width="4.41" height="2.21" fill="#0010b0" opacity="0.15"/><rect x="584.5" y="513.7" width="4.41" height="2.21" fill="#0010b0" opacity="0.3"/><rect x="527.2" y="456.1" width="4.41" height="2.21" fill="#0010b0" opacity="0.15"/><rect x="355.4" y="321.1" width="4.41" height="2.21" fill="#0010b0" opacity="0.2"/><rect x="390.7" y="159.5" width="4.41" height="2.21" fill="#0010b0" opacity="0.15"/><rect x="188.0" y="369.8" width="4.41" height="2.21" fill="#0010b0" opacity="0.15"/><rect x="86.6" y="531.4" width="4.41" height="2.21" fill="#0010b0" opacity="0.15"/><rect x="306.9" y="261.3" width="4.41" height="2.21" fill="#0010b0" opacity="0.15"/><rect x="597.8" y="356.5" width="4.41" height="2.21" fill="#0010b0" opacity="0.4"/><rect x="540.5" y="183.8" width="4.41" height="2.21" fill="#0010b0" opacity="0.55"/><rect x="289.3" y="524.7" width="4.41" height="2.21" fill="#0010b0" opacity="0.3"/><rect x="447.9" y="192.7" width="4.41" height="2.21" fill="#0010b0" opacity="0.3"/><rect x="443.5" y="150.6" width="4.41" height="2.21" fill="#0010b0" opacity="0.4"/><rect x="201.2" y="219.3" width="4.41" height="2.21" fill="#0010b0" opacity="0.2"/><rect x="179.2" y="148.4" width="4.41" height="2.21" fill="#0010b0" opacity="0.15"/><rect x="593.3" y="418.5" width="4.41" height="2.21" fill="#0010b0" opacity="0.2"/><rect x="280.5" y="396.3" width="4.41" height="2.21" fill="#0010b0" opacity="0.55"/><rect x="280.5" y="557.9" width="4.41" height="2.21" fill="#0010b0" opacity="0.2"/><rect x="540.5" y="507.0" width="4.41" height="2.21" fill="#0010b0" opacity="0.4"/><rect x="196.8" y="367.6" width="4.41" height="2.21" fill="#0010b0" opacity="0.4"/><rect x="306.9" y="144.0" width="4.41" height="2.21" fill="#0010b0" opacity="0.3"/><rect x="408.3" y="155.1" width="4.41" height="2.21" fill="#0010b0" opacity="0.2"/><rect x="276.1" y="365.4" width="4.41" height="2.21" fill="#0010b0" opacity="0.55"/><rect x="179.2" y="166.1" width="4.41" height="2.21" fill="#0010b0" opacity="0.2"/><rect x="77.8" y="489.3" width="4.41" height="2.21" fill="#0010b0" opacity="0.3"/><rect x="152.7" y="194.9" width="4.41" height="2.21" fill="#0010b0" opacity="0.2"/><rect x="342.2" y="150.6" width="4.41" height="2.21" fill="#0010b0" opacity="0.55"/><rect x="483.2" y="354.3" width="4.41" height="2.21" fill="#0010b0" opacity="0.55"/><rect x="580.1" y="214.8" width="4.41" height="2.21" fill="#0010b0" opacity="0.55"/><rect x="611.0" y="469.4" width="4.41" height="2.21" fill="#0010b0" opacity="0.2"/><rect x="500.8" y="245.8" width="4.41" height="2.21" fill="#0010b0" opacity="0.2"/><rect x="417.1" y="272.4" width="4.41" height="2.21" fill="#0010b0" opacity="0.55"/><rect x="346.6" y="553.5" width="4.41" height="2.21" fill="#0010b0" opacity="0.2"/><rect x="245.2" y="562.4" width="4.41" height="2.21" fill="#0010b0" opacity="0.55"/><rect x="289.3" y="531.4" width="4.41" height="2.21" fill="#0010b0" opacity="0.4"/><rect x="611.0" y="484.9" width="4.41" height="2.21" fill="#0010b0" opacity="0.15"/><rect x="540.5" y="170.6" width="4.41" height="2.21" fill="#0010b0" opacity="0.15"/><rect x="188.0" y="163.9" width="4.41" height="2.21" fill="#0010b0" opacity="0.55"/><rect x="355.4" y="279.0" width="4.41" height="2.21" fill="#0010b0" opacity="0.4"/><rect x="619.8" y="310.0" width="4.41" height="2.21" fill="#0010b0" opacity="0.55"/><rect x="262.9" y="551.3" width="4.41" height="2.21" fill="#0010b0" opacity="0.15"/><rect x="210.0" y="272.4" width="4.41" height="2.21" fill="#0010b0" opacity="0.4"/><rect x="148.3" y="301.2" width="4.41" height="2.21" fill="#0010b0" opacity="0.2"/><rect x="298.1" y="566.8" width="4.41" height="2.21" fill="#0010b0" opacity="0.15"/><rect x="143.9" y="294.5" width="4.41" height="2.21" fill="#0010b0" opacity="0.4"/><rect x="571.3" y="283.5" width="4.41" height="2.21" fill="#0010b0" opacity="0.15"/><rect x="117.5" y="243.6" width="4.41" height="2.21" fill="#0010b0" opacity="0.3"/><rect x="483.2" y="442.8" width="4.41" height="2.21" fill="#0010b0" opacity="0.55"/><rect x="214.4" y="194.9" width="4.41" height="2.21" fill="#0010b0" opacity="0.3"/><rect x="223.2" y="398.6" width="4.41" height="2.21" fill="#0010b0" opacity="0.3"/><rect x="223.2" y="478.2" width="4.41" height="2.21" fill="#0010b0" opacity="0.15"/><rect x="86.6" y="411.8" width="4.41" height="2.21" fill="#0010b0" opacity="0.3"/><rect x="417.1" y="161.7" width="4.41" height="2.21" fill="#0010b0" opacity="0.15"/><rect x="152.7" y="416.3" width="4.41" height="2.21" fill="#0010b0" opacity="0.15"/><rect x="417.1" y="323.3" width="4.41" height="2.21" fill="#0010b0" opacity="0.2"/><rect x="148.3" y="186.1" width="4.41" height="2.21" fill="#0010b0" opacity="0.4"/><rect x="483.2" y="560.1" width="4.41" height="2.21" fill="#0010b0" opacity="0.15"/><rect x="214.4" y="336.6" width="4.41" height="2.21" fill="#0010b0" opacity="0.3"/><rect x="161.5" y="531.4" width="4.41" height="2.21" fill="#0010b0" opacity="0.4"/><rect x="152.7" y="378.6" width="4.41" height="2.21" fill="#0010b0" opacity="0.15"/><rect x="628.6" y="467.2" width="4.41" height="2.21" fill="#0010b0" opacity="0.15"/><rect x="496.4" y="358.7" width="4.41" height="2.21" fill="#0010b0" opacity="0.55"/><rect x="82.2" y="487.1" width="4.41" height="2.21" fill="#0010b0" opacity="0.15"/><rect x="157.1" y="194.9" width="4.41" height="2.21" fill="#0010b0" opacity="0.15"/><rect x="505.2" y="560.1" width="4.41" height="2.21" fill="#0010b0" opacity="0.55"/><rect x="584.5" y="391.9" width="4.41" height="2.21" fill="#0010b0" opacity="0.4"/><rect x="161.5" y="436.2" width="4.41" height="2.21" fill="#0010b0" opacity="0.55"/><rect x="99.8" y="318.9" width="4.41" height="2.21" fill="#0010b0" opacity="0.55"/><rect x="165.9" y="416.3" width="4.41" height="2.21" fill="#0010b0" opacity="0.15"/><rect x="324.6" y="538.0" width="4.41" height="2.21" fill="#0010b0" opacity="0.15"/><rect x="628.6" y="491.5" width="4.41" height="2.21" fill="#0010b0" opacity="0.4"/><rect x="355.4" y="148.4" width="4.41" height="2.21" fill="#0010b0" opacity="0.3"/><rect x="408.3" y="223.7" width="4.41" height="2.21" fill="#0010b0" opacity="0.55"/><rect x="293.7" y="436.2" width="4.41" height="2.21" fill="#0010b0" opacity="0.2"/><rect x="452.3" y="515.9" width="4.41" height="2.21" fill="#0010b0" opacity="0.4"/><rect x="628.6" y="279.0" width="4.41" height="2.21" fill="#0010b0" opacity="0.3"/><rect x="522.8" y="520.3" width="4.41" height="2.21" fill="#0010b0" opacity="0.3"/><rect x="289.3" y="502.6" width="4.41" height="2.21" fill="#0010b0" opacity="0.4"/><rect x="293.7" y="263.5" width="4.41" height="2.21" fill="#0010b0" opacity="0.4"/><rect x="315.8" y="473.8" width="4.41" height="2.21" fill="#0010b0" opacity="0.3"/><rect x="302.5" y="219.3" width="4.41" height="2.21" fill="#0010b0" opacity="0.2"/><rect x="628.6" y="341.0" width="4.41" height="2.21" fill="#0010b0" opacity="0.15"/><rect x="139.5" y="298.9" width="4.41" height="2.21" fill="#0010b0" opacity="0.2"/><rect x="192.4" y="398.6" width="4.41" height="2.21" fill="#0010b0" opacity="0.4"/><rect x="377.4" y="263.5" width="4.41" height="2.21" fill="#0010b0" opacity="0.4"/><rect x="496.4" y="498.2" width="4.41" height="2.21" fill="#0010b0" opacity="0.55"/><rect x="624.2" y="524.7" width="4.41" height="2.21" fill="#0010b0" opacity="0.3"/><rect x="575.7" y="325.5" width="4.41" height="2.21" fill="#0010b0" opacity="0.15"/><rect x="104.2" y="301.2" width="4.41" height="2.21" fill="#0010b0" opacity="0.55"/><rect x="113.1" y="526.9" width="4.41" height="2.21" fill="#0010b0" opacity="0.3"/><rect x="465.6" y="318.9" width="4.41" height="2.21" fill="#0010b0" opacity="0.55"/><rect x="86.6" y="507.0" width="4.41" height="2.21" fill="#0010b0" opacity="0.2"/><rect x="522.8" y="400.8" width="4.41" height="2.21" fill="#0010b0" opacity="0.2"/><rect x="95.4" y="294.5" width="4.41" height="2.21" fill="#0010b0" opacity="0.2"/><rect x="227.6" y="170.6" width="4.41" height="2.21" fill="#0010b0" opacity="0.15"/><rect x="571.3" y="203.8" width="4.41" height="2.21" fill="#0010b0" opacity="0.55"/><rect x="483.2" y="186.1" width="4.41" height="2.21" fill="#0010b0" opacity="0.2"/><rect x="293.7" y="411.8" width="4.41" height="2.21" fill="#0010b0" opacity="0.3"/><rect x="267.3" y="546.9" width="4.41" height="2.21" fill="#0010b0" opacity="0.15"/><rect x="597.8" y="445.0" width="4.41" height="2.21" fill="#0010b0" opacity="0.15"/><rect x="267.3" y="270.2" width="4.41" height="2.21" fill="#0010b0" opacity="0.3"/><rect x="456.8" y="449.5" width="4.41" height="2.21" fill="#0010b0" opacity="0.55"/><rect x="245.2" y="365.4" width="4.41" height="2.21" fill="#0010b0" opacity="0.2"/><rect x="165.9" y="376.4" width="4.41" height="2.21" fill="#0010b0" opacity="0.4"/><rect x="214.4" y="398.6" width="4.41" height="2.21" fill="#0010b0" opacity="0.4"/><rect x="289.3" y="498.2" width="4.41" height="2.21" fill="#0010b0" opacity="0.15"/><rect x="492.0" y="453.9" width="4.41" height="2.21" fill="#0010b0" opacity="0.55"/><rect x="452.3" y="405.2" width="4.41" height="2.21" fill="#0010b0" opacity="0.3"/><rect x="298.1" y="199.3" width="4.41" height="2.21" fill="#0010b0" opacity="0.15"/><rect x="306.9" y="281.2" width="4.41" height="2.21" fill="#0010b0" opacity="0.4"/><rect x="165.9" y="318.9" width="4.41" height="2.21" fill="#0010b0" opacity="0.55"/><rect x="430.3" y="292.3" width="4.41" height="2.21" fill="#0010b0" opacity="0.15"/><rect x="461.2" y="429.5" width="4.41" height="2.21" fill="#0010b0" opacity="0.15"/><rect x="108.7" y="391.9" width="4.41" height="2.21" fill="#0010b0" opacity="0.3"/><rect x="540.5" y="298.9" width="4.41" height="2.21" fill="#0010b0" opacity="0.4"/><rect x="99.8" y="265.7" width="4.41" height="2.21" fill="#0010b0" opacity="0.15"/><rect x="549.3" y="161.7" width="4.41" height="2.21" fill="#0010b0" opacity="0.2"/><rect x="443.5" y="531.4" width="4.41" height="2.21" fill="#0010b0" opacity="0.2"/><rect x="597.8" y="228.1" width="4.41" height="2.21" fill="#0010b0" opacity="0.55"/><rect x="562.5" y="422.9" width="4.41" height="2.21" fill="#0010b0" opacity="0.55"/><rect x="165.9" y="268.0" width="4.41" height="2.21" fill="#0010b0" opacity="0.4"/><rect x="395.1" y="555.7" width="4.41" height="2.21" fill="#0010b0" opacity="0.55"/><rect x="254.1" y="438.4" width="4.41" height="2.21" fill="#0010b0" opacity="0.55"/><rect x="355.4" y="318.9" width="4.41" height="2.21" fill="#0010b0" opacity="0.4"/><rect x="302.5" y="314.4" width="4.41" height="2.21" fill="#0010b0" opacity="0.2"/><rect x="373.0" y="467.2" width="4.41" height="2.21" fill="#0010b0" opacity="0.4"/><rect x="293.7" y="376.4" width="4.41" height="2.21" fill="#0010b0" opacity="0.55"/><rect x="196.8" y="427.3" width="4.41" height="2.21" fill="#0010b0" opacity="0.15"/><rect x="492.0" y="159.5" width="4.41" height="2.21" fill="#0010b0" opacity="0.55"/><rect x="117.5" y="436.2" width="4.41" height="2.21" fill="#0010b0" opacity="0.4"/><rect x="205.6" y="420.7" width="4.41" height="2.21" fill="#0010b0" opacity="0.15"/><rect x="254.1" y="179.4" width="4.41" height="2.21" fill="#0010b0" opacity="0.55"/><rect x="584.5" y="376.4" width="4.41" height="2.21" fill="#0010b0" opacity="0.4"/><rect x="368.6" y="283.5" width="4.41" height="2.21" fill="#0010b0" opacity="0.4"/><rect x="624.2" y="214.8" width="4.41" height="2.21" fill="#0010b0" opacity="0.3"/><rect x="558.1" y="411.8" width="4.41" height="2.21" fill="#0010b0" opacity="0.55"/><rect x="425.9" y="203.8" width="4.41" height="2.21" fill="#0010b0" opacity="0.2"/><rect x="540.5" y="493.7" width="4.41" height="2.21" fill="#0010b0" opacity="0.15"/><rect x="359.8" y="217.0" width="4.41" height="2.21" fill="#0010b0" opacity="0.15"/><rect x="108.7" y="252.5" width="4.41" height="2.21" fill="#0010b0" opacity="0.2"/><rect x="324.6" y="150.6" width="4.41" height="2.21" fill="#0010b0" opacity="0.3"/><rect x="430.3" y="553.5" width="4.41" height="2.21" fill="#0010b0" opacity="0.3"/><rect x="342.2" y="493.7" width="4.41" height="2.21" fill="#0010b0" opacity="0.4"/><rect x="183.6" y="425.1" width="4.41" height="2.21" fill="#0010b0" opacity="0.55"/><rect x="205.6" y="431.8" width="4.41" height="2.21" fill="#0010b0" opacity="0.55"/><rect x="351.0" y="549.1" width="4.41" height="2.21" fill="#0010b0" opacity="0.2"/><rect x="558.1" y="155.1" width="4.41" height="2.21" fill="#0010b0" opacity="0.4"/><rect x="531.7" y="442.8" width="4.41" height="2.21" fill="#0010b0" opacity="0.55"/><rect x="245.2" y="447.3" width="4.41" height="2.21" fill="#0010b0" opacity="0.2"/><rect x="311.3" y="442.8" width="4.41" height="2.21" fill="#0010b0" opacity="0.2"/><rect x="218.8" y="274.6" width="4.41" height="2.21" fill="#0010b0" opacity="0.3"/><rect x="271.7" y="321.1" width="4.41" height="2.21" fill="#0010b0" opacity="0.55"/><rect x="421.5" y="252.5" width="4.41" height="2.21" fill="#0010b0" opacity="0.2"/><rect x="284.9" y="197.1" width="4.41" height="2.21" fill="#0010b0" opacity="0.2"/><rect x="337.8" y="217.0" width="4.41" height="2.21" fill="#0010b0" opacity="0.15"/><rect x="558.1" y="380.8" width="4.41" height="2.21" fill="#0010b0" opacity="0.55"/><rect x="210.0" y="256.9" width="4.41" height="2.21" fill="#0010b0" opacity="0.4"/><rect x="86.6" y="197.1" width="4.41" height="2.21" fill="#0010b0" opacity="0.2"/><rect x="470.0" y="347.6" width="4.41" height="2.21" fill="#0010b0" opacity="0.15"/><rect x="452.3" y="427.3" width="4.41" height="2.21" fill="#0010b0" opacity="0.2"/><rect x="148.3" y="416.3" width="4.41" height="2.21" fill="#0010b0" opacity="0.15"/><rect x="95.4" y="163.9" width="4.41" height="2.21" fill="#0010b0" opacity="0.55"/><rect x="611.0" y="225.9" width="4.41" height="2.21" fill="#0010b0" opacity="0.2"/><rect x="276.1" y="208.2" width="4.41" height="2.21" fill="#0010b0" opacity="0.2"/><rect x="262.9" y="232.5" width="4.41" height="2.21" fill="#0010b0" opacity="0.3"/><rect x="174.8" y="471.6" width="4.41" height="2.21" fill="#0010b0" opacity="0.15"/><rect x="218.8" y="529.2" width="4.41" height="2.21" fill="#0010b0" opacity="0.4"/><rect x="152.7" y="197.1" width="4.41" height="2.21" fill="#0010b0" opacity="0.3"/><rect x="509.6" y="407.4" width="4.41" height="2.21" fill="#0010b0" opacity="0.4"/><rect x="465.6" y="387.5" width="4.41" height="2.21" fill="#0010b0" opacity="0.2"/><rect x="487.6" y="150.6" width="4.41" height="2.21" fill="#0010b0" opacity="0.15"/><rect x="293.7" y="245.8" width="4.41" height="2.21" fill="#0010b0" opacity="0.4"/><rect x="580.1" y="347.6" width="4.41" height="2.21" fill="#0010b0" opacity="0.3"/><rect x="522.8" y="252.5" width="4.41" height="2.21" fill="#0010b0" opacity="0.55"/><rect x="254.1" y="197.1" width="4.41" height="2.21" fill="#0010b0" opacity="0.55"/><rect x="82.2" y="325.5" width="4.41" height="2.21" fill="#0010b0" opacity="0.15"/><rect x="522.8" y="465.0" width="4.41" height="2.21" fill="#0010b0" opacity="0.55"/><rect x="280.5" y="429.5" width="4.41" height="2.21" fill="#0010b0" opacity="0.55"/><rect x="452.3" y="290.1" width="4.41" height="2.21" fill="#0010b0" opacity="0.3"/><rect x="196.8" y="564.6" width="4.41" height="2.21" fill="#0010b0" opacity="0.2"/><rect x="522.8" y="219.3" width="4.41" height="2.21" fill="#0010b0" opacity="0.3"/><rect x="483.2" y="387.5" width="4.41" height="2.21" fill="#0010b0" opacity="0.2"/><rect x="522.8" y="259.1" width="4.41" height="2.21" fill="#0010b0" opacity="0.2"/><rect x="148.3" y="336.6" width="4.41" height="2.21" fill="#0010b0" opacity="0.3"/><rect x="597.8" y="199.3" width="4.41" height="2.21" fill="#0010b0" opacity="0.15"/><rect x="470.0" y="504.8" width="4.41" height="2.21" fill="#0010b0" opacity="0.55"/><rect x="121.9" y="274.6" width="4.41" height="2.21" fill="#0010b0" opacity="0.3"/><rect x="403.9" y="334.4" width="4.41" height="2.21" fill="#0010b0" opacity="0.2"/><rect x="522.8" y="465.0" width="4.41" height="2.21" fill="#0010b0" opacity="0.2"/><rect x="152.7" y="363.1" width="4.41" height="2.21" fill="#0010b0" opacity="0.55"/><rect x="628.6" y="507.0" width="4.41" height="2.21" fill="#0010b0" opacity="0.2"/><rect x="201.2" y="367.6" width="4.41" height="2.21" fill="#0010b0" opacity="0.55"/><rect x="91.0" y="208.2" width="4.41" height="2.21" fill="#0010b0" opacity="0.55"/><rect x="188.0" y="562.4" width="4.41" height="2.21" fill="#0010b0" opacity="0.2"/><rect x="121.9" y="254.7" width="4.41" height="2.21" fill="#0010b0" opacity="0.4"/><rect x="77.8" y="199.3" width="4.41" height="2.21" fill="#0010b0" opacity="0.3"/><rect x="351.0" y="298.9" width="4.41" height="2.21" fill="#0010b0" opacity="0.3"/><rect x="536.1" y="438.4" width="4.41" height="2.21" fill="#0010b0" opacity="0.55"/><rect x="179.2" y="504.8" width="4.41" height="2.21" fill="#0010b0" opacity="0.4"/><rect x="152.7" y="453.9" width="4.41" height="2.21" fill="#0010b0" opacity="0.55"/><rect x="117.5" y="360.9" width="4.41" height="2.21" fill="#0010b0" opacity="0.2"/><rect x="500.8" y="409.6" width="4.41" height="2.21" fill="#0010b0" opacity="0.2"/><rect x="624.2" y="449.5" width="4.41" height="2.21" fill="#0010b0" opacity="0.55"/><rect x="130.7" y="385.3" width="4.41" height="2.21" fill="#0010b0" opacity="0.4"/><rect x="540.5" y="303.4" width="4.41" height="2.21" fill="#0010b0" opacity="0.55"/><rect x="518.4" y="482.7" width="4.41" height="2.21" fill="#0010b0" opacity="0.3"/><rect x="478.8" y="442.8" width="4.41" height="2.21" fill="#0010b0" opacity="0.3"/><rect x="611.0" y="513.7" width="4.41" height="2.21" fill="#0010b0" opacity="0.3"/><rect x="386.2" y="518.1" width="4.41" height="2.21" fill="#0010b0" opacity="0.3"/><rect x="95.4" y="150.6" width="4.41" height="2.21" fill="#0010b0" opacity="0.2"/><rect x="113.1" y="502.6" width="4.41" height="2.21" fill="#0010b0" opacity="0.2"/><rect x="527.2" y="531.4" width="4.41" height="2.21" fill="#0010b0" opacity="0.4"/><rect x="126.3" y="321.1" width="4.41" height="2.21" fill="#0010b0" opacity="0.4"/><rect x="121.9" y="471.6" width="4.41" height="2.21" fill="#0010b0" opacity="0.3"/><rect x="148.3" y="270.2" width="4.41" height="2.21" fill="#0010b0" opacity="0.4"/><rect x="606.6" y="285.7" width="4.41" height="2.21" fill="#0010b0" opacity="0.2"/><rect x="117.5" y="438.4" width="4.41" height="2.21" fill="#0010b0" opacity="0.15"/><rect x="593.3" y="223.7" width="4.41" height="2.21" fill="#0010b0" opacity="0.2"/><rect x="196.8" y="170.6" width="4.41" height="2.21" fill="#0010b0" opacity="0.55"/>
<rect x="339.2" y="381.0" width="4.41" height="2.21" fill="#000" opacity="0.15"/>
<rect x="343.5" y="387.8" width="4.41" height="2.21" fill="#000" opacity="0.25"/>
<rect x="301.9" y="386.8" width="4.41" height="2.21" fill="#000" opacity="0.25"/>
<rect x="311.6" y="348.9" width="4.41" height="2.21" fill="#000" opacity="0.4"/>
<rect x="301.4" y="393.7" width="4.41" height="2.21" fill="#000" opacity="0.4"/>
<rect x="374.7" y="355.6" width="4.41" height="2.21" fill="#000" opacity="0.25"/>
<rect x="359.2" y="348.4" width="4.41" height="2.21" fill="#000" opacity="0.15"/>
<rect x="318.7" y="372.0" width="4.41" height="2.21" fill="#000" opacity="0.4"/>
<rect x="329.2" y="351.4" width="4.41" height="2.21" fill="#000" opacity="0.25"/>
<rect x="197.8" y="178.9" width="4.41" height="2.21" fill="#ffffff"/>
<rect x="590.3" y="157.4" width="4.41" height="2.21" fill="#20e0f0"/>
<rect x="170.3" y="272.4" width="4.41" height="2.21" fill="#18d8e8"/>
<rect x="146.3" y="366.4" width="4.41" height="2.21" fill="#20f0f0"/>
<rect x="422.8" y="286.4" width="4.41" height="2.21" fill="#10c8e8"/>
<rect x="586.8" y="538.9" width="4.41" height="2.21" fill="#18d8f0"/>
<rect x="592.8" y="331.4" width="4.41" height="2.21" fill="#1090ff"/>
<rect x="177.8" y="180.4" width="4.41" height="2.21" fill="#0848ff"/>
<rect x="150.3" y="166.4" width="4.41" height="2.21" fill="#0838f0"/>
<rect x="99.3" y="286.4" width="4.41" height="2.21" fill="#0858ff"/>
<rect x="286.3" y="293.4" width="4.41" height="2.21" fill="#0858ff"/>
<rect x="293.8" y="299.4" width="4.41" height="2.21" fill="#0640f0"/>
<rect x="211.3" y="411.4" width="4.41" height="2.21" fill="#0868ff"/>
<rect x="207.8" y="401.4" width="4.41" height="2.21" fill="#0848f0"/>
<rect x="316.8" y="485.4" width="4.41" height="2.21" fill="#0868ff"/>
<rect x="398.8" y="456.4" width="4.41" height="2.21" fill="#0850f0"/>
<rect x="256.3" y="473.9" width="4.41" height="2.21" fill="#0640e8"/>
<rect x="262.8" y="432.4" width="4.41" height="2.21" fill="#0638e0"/>
<rect x="252.8" y="366.4" width="4.41" height="2.21" fill="#0640e8"/>
<rect x="491.3" y="264.4" width="4.41" height="2.21" fill="#0430e0"/>
<rect x="327.8" y="262.9" width="4.41" height="2.21" fill="#0428d0"/>
<rect x="419.3" y="176.4" width="4.41" height="2.21" fill="#0428d0"/>
<rect x="396.3" y="194.4" width="4.41" height="2.21" fill="#0430d8"/>
<rect x="217.8" y="149.9" width="4.41" height="2.21" fill="#0420c0"/>
<rect x="289.3" y="163.9" width="4.41" height="2.21" fill="#0428d0"/>
<rect x="549.3" y="149.4" width="4.41" height="2.21" fill="#0428c8"/>
<rect x="613.8" y="172.9" width="4.41" height="2.21" fill="#0420c0"/>
<rect x="617.8" y="196.4" width="4.41" height="2.21" fill="#0420c0"/>
<rect x="476.8" y="239.4" width="4.41" height="2.21" fill="#0420b8"/>
<rect x="112.8" y="252.4" width="4.41" height="2.21" fill="#0420c0"/>
<rect x="184.3" y="252.4" width="4.41" height="2.21" fill="#0318b0"/>
<rect x="221.3" y="284.4" width="4.41" height="2.21" fill="#0420c0"/>
<rect x="108.8" y="317.4" width="4.41" height="2.21" fill="#0420c0"/>
<rect x="85.3" y="389.4" width="4.41" height="2.21" fill="#0420c0"/>
<rect x="590.3" y="291.4" width="4.41" height="2.21" fill="#0428d0"/>
<rect x="382.8" y="325.4" width="4.41" height="2.21" fill="#10a0ff"/>
<rect x="389.3" y="351.9" width="4.41" height="2.21" fill="#30e8ff"/>
<rect x="426.8" y="364.4" width="4.41" height="2.21" fill="#0a70ff"/>
<rect x="570.3" y="544.9" width="4.41" height="2.21" fill="#0428d0"/>
<rect x="573.8" y="553.9" width="4.41" height="2.21" fill="#0420c0"/>
<rect x="227.8" y="510.4" width="4.41" height="2.21" fill="#0318b0"/>
<rect x="245.3" y="506.4" width="4.41" height="2.21" fill="#0318b0"/>
<rect x="461.3" y="188.4" width="4.41" height="2.21" fill="#0318b0"/>
</g>
<g clip-path="url(#cR)">
<rect x="713" y="144" width="564" height="425" fill="#060000" />
<ellipse cx="984" cy="354.5" rx="262" ry="116.8" fill="url(#gHot)"/>
<ellipse cx="984" cy="354.5" rx="209.6" ry="139" fill="url(#gHot)" style="mix-blend-mode:lighten"/>
<ellipse cx="1199" cy="349.5" rx="160" ry="42" fill="url(#gTail)" filter="url(#fBlur)" style="mix-blend-mode:screen"/>
<rect x="713" y="144" width="564" height="425" fill="url(#pNoise)"/>
<rect x="1039.1" y="190.5" width="4.41" height="2.21" fill="#a00000" opacity="0.15"/><rect x="1056.7" y="383.1" width="4.41" height="2.21" fill="#a00000" opacity="0.4"/><rect x="1114.0" y="217.0" width="4.41" height="2.21" fill="#a00000" opacity="0.2"/><rect x="1012.6" y="394.1" width="4.41" height="2.21" fill="#a00000" opacity="0.15"/><rect x="959.8" y="493.7" width="4.41" height="2.21" fill="#a00000" opacity="0.4"/><rect x="739.4" y="203.8" width="4.41" height="2.21" fill="#a00000" opacity="0.15"/><rect x="1272.6" y="380.8" width="4.41" height="2.21" fill="#a00000" opacity="0.15"/><rect x="1197.7" y="345.4" width="4.41" height="2.21" fill="#a00000" opacity="0.15"/><rect x="942.1" y="163.9" width="4.41" height="2.21" fill="#a00000" opacity="0.55"/><rect x="1127.2" y="515.9" width="4.41" height="2.21" fill="#a00000" opacity="0.2"/><rect x="955.3" y="560.1" width="4.41" height="2.21" fill="#a00000" opacity="0.3"/><rect x="1127.2" y="467.2" width="4.41" height="2.21" fill="#a00000" opacity="0.3"/><rect x="1065.5" y="467.2" width="4.41" height="2.21" fill="#a00000" opacity="0.15"/><rect x="1246.2" y="243.6" width="4.41" height="2.21" fill="#a00000" opacity="0.4"/><rect x="1215.3" y="524.7" width="4.41" height="2.21" fill="#a00000" opacity="0.2"/><rect x="915.7" y="243.6" width="4.41" height="2.21" fill="#a00000" opacity="0.55"/><rect x="1074.3" y="524.7" width="4.41" height="2.21" fill="#a00000" opacity="0.55"/><rect x="933.3" y="473.8" width="4.41" height="2.21" fill="#a00000" opacity="0.15"/><rect x="805.5" y="199.3" width="4.41" height="2.21" fill="#a00000" opacity="0.4"/><rect x="752.7" y="465.0" width="4.41" height="2.21" fill="#a00000" opacity="0.3"/><rect x="1025.8" y="478.2" width="4.41" height="2.21" fill="#a00000" opacity="0.3"/><rect x="832.0" y="352.1" width="4.41" height="2.21" fill="#a00000" opacity="0.3"/><rect x="1056.7" y="400.8" width="4.41" height="2.21" fill="#a00000" opacity="0.55"/><rect x="955.3" y="290.1" width="4.41" height="2.21" fill="#a00000" opacity="0.2"/><rect x="832.0" y="493.7" width="4.41" height="2.21" fill="#a00000" opacity="0.15"/><rect x="1268.2" y="276.8" width="4.41" height="2.21" fill="#a00000" opacity="0.3"/><rect x="871.6" y="564.6" width="4.41" height="2.21" fill="#a00000" opacity="0.55"/><rect x="823.2" y="360.9" width="4.41" height="2.21" fill="#a00000" opacity="0.2"/><rect x="1219.7" y="161.7" width="4.41" height="2.21" fill="#a00000" opacity="0.15"/><rect x="1180.1" y="365.4" width="4.41" height="2.21" fill="#a00000" opacity="0.15"/><rect x="893.7" y="270.2" width="4.41" height="2.21" fill="#a00000" opacity="0.15"/><rect x="959.8" y="562.4" width="4.41" height="2.21" fill="#a00000" opacity="0.15"/><rect x="1210.9" y="566.8" width="4.41" height="2.21" fill="#a00000" opacity="0.15"/><rect x="1100.8" y="152.9" width="4.41" height="2.21" fill="#a00000" opacity="0.4"/><rect x="1263.8" y="252.5" width="4.41" height="2.21" fill="#a00000" opacity="0.15"/><rect x="796.7" y="292.3" width="4.41" height="2.21" fill="#a00000" opacity="0.4"/><rect x="933.3" y="403.0" width="4.41" height="2.21" fill="#a00000" opacity="0.3"/><rect x="955.3" y="194.9" width="4.41" height="2.21" fill="#a00000" opacity="0.15"/><rect x="902.5" y="533.6" width="4.41" height="2.21" fill="#a00000" opacity="0.55"/><rect x="981.8" y="285.7" width="4.41" height="2.21" fill="#a00000" opacity="0.15"/><rect x="1184.5" y="237.0" width="4.41" height="2.21" fill="#a00000" opacity="0.15"/><rect x="1210.9" y="336.6" width="4.41" height="2.21" fill="#a00000" opacity="0.4"/><rect x="898.1" y="491.5" width="4.41" height="2.21" fill="#a00000" opacity="0.4"/><rect x="787.9" y="535.8" width="4.41" height="2.21" fill="#a00000" opacity="0.2"/><rect x="1043.5" y="383.1" width="4.41" height="2.21" fill="#a00000" opacity="0.4"/><rect x="1047.9" y="458.3" width="4.41" height="2.21" fill="#a00000" opacity="0.55"/><rect x="770.3" y="303.4" width="4.41" height="2.21" fill="#a00000" opacity="0.15"/><rect x="739.4" y="500.4" width="4.41" height="2.21" fill="#a00000" opacity="0.2"/><rect x="1087.5" y="460.5" width="4.41" height="2.21" fill="#a00000" opacity="0.4"/><rect x="990.6" y="237.0" width="4.41" height="2.21" fill="#a00000" opacity="0.15"/><rect x="1091.9" y="460.5" width="4.41" height="2.21" fill="#a00000" opacity="0.55"/><rect x="840.8" y="276.8" width="4.41" height="2.21" fill="#a00000" opacity="0.55"/><rect x="1241.8" y="398.6" width="4.41" height="2.21" fill="#a00000" opacity="0.3"/><rect x="717.4" y="334.4" width="4.41" height="2.21" fill="#a00000" opacity="0.4"/><rect x="739.4" y="223.7" width="4.41" height="2.21" fill="#a00000" opacity="0.4"/><rect x="942.1" y="529.2" width="4.41" height="2.21" fill="#a00000" opacity="0.15"/><rect x="906.9" y="513.7" width="4.41" height="2.21" fill="#a00000" opacity="0.4"/><rect x="1188.9" y="188.3" width="4.41" height="2.21" fill="#a00000" opacity="0.4"/><rect x="1021.4" y="414.1" width="4.41" height="2.21" fill="#a00000" opacity="0.55"/><rect x="911.3" y="440.6" width="4.41" height="2.21" fill="#a00000" opacity="0.55"/><rect x="1047.9" y="292.3" width="4.41" height="2.21" fill="#a00000" opacity="0.15"/><rect x="964.2" y="177.2" width="4.41" height="2.21" fill="#a00000" opacity="0.4"/><rect x="1136.0" y="152.9" width="4.41" height="2.21" fill="#a00000" opacity="0.4"/><rect x="1175.7" y="307.8" width="4.41" height="2.21" fill="#a00000" opacity="0.3"/><rect x="1171.2" y="341.0" width="4.41" height="2.21" fill="#a00000" opacity="0.3"/><rect x="1149.2" y="166.1" width="4.41" height="2.21" fill="#a00000" opacity="0.4"/><rect x="1250.6" y="456.1" width="4.41" height="2.21" fill="#a00000" opacity="0.3"/><rect x="1025.8" y="533.6" width="4.41" height="2.21" fill="#a00000" opacity="0.15"/><rect x="1144.8" y="265.7" width="4.41" height="2.21" fill="#a00000" opacity="0.3"/><rect x="876.0" y="427.3" width="4.41" height="2.21" fill="#a00000" opacity="0.3"/><rect x="836.4" y="493.7" width="4.41" height="2.21" fill="#a00000" opacity="0.4"/><rect x="845.2" y="301.2" width="4.41" height="2.21" fill="#a00000" opacity="0.55"/><rect x="1210.9" y="146.2" width="4.41" height="2.21" fill="#a00000" opacity="0.15"/><rect x="1003.8" y="206.0" width="4.41" height="2.21" fill="#a00000" opacity="0.2"/><rect x="1241.8" y="166.1" width="4.41" height="2.21" fill="#a00000" opacity="0.4"/><rect x="801.1" y="298.9" width="4.41" height="2.21" fill="#a00000" opacity="0.2"/><rect x="1118.4" y="462.8" width="4.41" height="2.21" fill="#a00000" opacity="0.2"/><rect x="814.3" y="245.8" width="4.41" height="2.21" fill="#a00000" opacity="0.55"/><rect x="1158.0" y="489.3" width="4.41" height="2.21" fill="#a00000" opacity="0.3"/><rect x="1043.5" y="188.3" width="4.41" height="2.21" fill="#a00000" opacity="0.55"/><rect x="902.5" y="166.1" width="4.41" height="2.21" fill="#a00000" opacity="0.15"/><rect x="915.7" y="152.9" width="4.41" height="2.21" fill="#a00000" opacity="0.2"/><rect x="867.2" y="557.9" width="4.41" height="2.21" fill="#a00000" opacity="0.3"/><rect x="1241.8" y="544.7" width="4.41" height="2.21" fill="#a00000" opacity="0.3"/><rect x="765.9" y="168.3" width="4.41" height="2.21" fill="#a00000" opacity="0.55"/><rect x="827.6" y="327.7" width="4.41" height="2.21" fill="#a00000" opacity="0.15"/><rect x="862.8" y="341.0" width="4.41" height="2.21" fill="#a00000" opacity="0.15"/><rect x="889.2" y="263.5" width="4.41" height="2.21" fill="#a00000" opacity="0.2"/><rect x="1193.3" y="323.3" width="4.41" height="2.21" fill="#a00000" opacity="0.55"/><rect x="959.8" y="445.0" width="4.41" height="2.21" fill="#a00000" opacity="0.55"/><rect x="1202.1" y="518.1" width="4.41" height="2.21" fill="#a00000" opacity="0.3"/><rect x="959.8" y="564.6" width="4.41" height="2.21" fill="#a00000" opacity="0.55"/><rect x="1061.1" y="400.8" width="4.41" height="2.21" fill="#a00000" opacity="0.2"/><rect x="1114.0" y="358.7" width="4.41" height="2.21" fill="#a00000" opacity="0.3"/><rect x="757.1" y="420.7" width="4.41" height="2.21" fill="#a00000" opacity="0.4"/><rect x="1105.2" y="553.5" width="4.41" height="2.21" fill="#a00000" opacity="0.2"/><rect x="893.7" y="261.3" width="4.41" height="2.21" fill="#a00000" opacity="0.3"/><rect x="1171.2" y="383.1" width="4.41" height="2.21" fill="#a00000" opacity="0.15"/><rect x="757.1" y="321.1" width="4.41" height="2.21" fill="#a00000" opacity="0.4"/><rect x="1241.8" y="234.8" width="4.41" height="2.21" fill="#a00000" opacity="0.55"/><rect x="1180.1" y="349.9" width="4.41" height="2.21" fill="#a00000" opacity="0.2"/><rect x="1065.5" y="161.7" width="4.41" height="2.21" fill="#a00000" opacity="0.3"/><rect x="1215.3" y="241.4" width="4.41" height="2.21" fill="#a00000" opacity="0.4"/><rect x="1127.2" y="469.4" width="4.41" height="2.21" fill="#a00000" opacity="0.4"/><rect x="730.6" y="447.3" width="4.41" height="2.21" fill="#a00000" opacity="0.55"/><rect x="1193.3" y="487.1" width="4.41" height="2.21" fill="#a00000" opacity="0.2"/><rect x="1206.5" y="250.2" width="4.41" height="2.21" fill="#a00000" opacity="0.4"/><rect x="783.5" y="400.8" width="4.41" height="2.21" fill="#a00000" opacity="0.15"/><rect x="1153.6" y="504.8" width="4.41" height="2.21" fill="#a00000" opacity="0.4"/><rect x="999.4" y="175.0" width="4.41" height="2.21" fill="#a00000" opacity="0.15"/><rect x="1184.5" y="363.1" width="4.41" height="2.21" fill="#a00000" opacity="0.3"/><rect x="1017.0" y="551.3" width="4.41" height="2.21" fill="#a00000" opacity="0.2"/><rect x="871.6" y="484.9" width="4.41" height="2.21" fill="#a00000" opacity="0.15"/><rect x="1232.9" y="449.5" width="4.41" height="2.21" fill="#a00000" opacity="0.15"/><rect x="787.9" y="383.1" width="4.41" height="2.21" fill="#a00000" opacity="0.4"/><rect x="876.0" y="507.0" width="4.41" height="2.21" fill="#a00000" opacity="0.3"/><rect x="845.2" y="493.7" width="4.41" height="2.21" fill="#a00000" opacity="0.15"/><rect x="946.5" y="445.0" width="4.41" height="2.21" fill="#a00000" opacity="0.2"/><rect x="1100.8" y="318.9" width="4.41" height="2.21" fill="#a00000" opacity="0.3"/><rect x="959.8" y="522.5" width="4.41" height="2.21" fill="#a00000" opacity="0.55"/><rect x="884.8" y="179.4" width="4.41" height="2.21" fill="#a00000" opacity="0.2"/><rect x="836.4" y="538.0" width="4.41" height="2.21" fill="#a00000" opacity="0.3"/><rect x="995.0" y="206.0" width="4.41" height="2.21" fill="#a00000" opacity="0.55"/><rect x="801.1" y="188.3" width="4.41" height="2.21" fill="#a00000" opacity="0.15"/><rect x="1250.6" y="500.4" width="4.41" height="2.21" fill="#a00000" opacity="0.15"/><rect x="1008.2" y="296.7" width="4.41" height="2.21" fill="#a00000" opacity="0.55"/><rect x="1184.5" y="502.6" width="4.41" height="2.21" fill="#a00000" opacity="0.15"/><rect x="933.3" y="560.1" width="4.41" height="2.21" fill="#a00000" opacity="0.15"/><rect x="858.4" y="243.6" width="4.41" height="2.21" fill="#a00000" opacity="0.2"/><rect x="1263.8" y="177.2" width="4.41" height="2.21" fill="#a00000" opacity="0.2"/><rect x="1003.8" y="144.0" width="4.41" height="2.21" fill="#a00000" opacity="0.55"/><rect x="1144.8" y="168.3" width="4.41" height="2.21" fill="#a00000" opacity="0.55"/><rect x="1184.5" y="168.3" width="4.41" height="2.21" fill="#a00000" opacity="0.15"/><rect x="867.2" y="225.9" width="4.41" height="2.21" fill="#a00000" opacity="0.15"/><rect x="1109.6" y="509.2" width="4.41" height="2.21" fill="#a00000" opacity="0.55"/><rect x="1180.1" y="148.4" width="4.41" height="2.21" fill="#a00000" opacity="0.4"/><rect x="801.1" y="400.8" width="4.41" height="2.21" fill="#a00000" opacity="0.3"/><rect x="1034.7" y="522.5" width="4.41" height="2.21" fill="#a00000" opacity="0.55"/><rect x="748.2" y="237.0" width="4.41" height="2.21" fill="#a00000" opacity="0.2"/><rect x="1056.7" y="208.2" width="4.41" height="2.21" fill="#a00000" opacity="0.2"/><rect x="889.2" y="221.5" width="4.41" height="2.21" fill="#a00000" opacity="0.55"/><rect x="836.4" y="491.5" width="4.41" height="2.21" fill="#a00000" opacity="0.4"/><rect x="933.3" y="239.2" width="4.41" height="2.21" fill="#a00000" opacity="0.55"/><rect x="942.1" y="179.4" width="4.41" height="2.21" fill="#a00000" opacity="0.3"/><rect x="823.2" y="473.8" width="4.41" height="2.21" fill="#a00000" opacity="0.2"/><rect x="840.8" y="431.8" width="4.41" height="2.21" fill="#a00000" opacity="0.4"/><rect x="1114.0" y="179.4" width="4.41" height="2.21" fill="#a00000" opacity="0.2"/><rect x="1136.0" y="332.2" width="4.41" height="2.21" fill="#a00000" opacity="0.15"/><rect x="990.6" y="225.9" width="4.41" height="2.21" fill="#a00000" opacity="0.3"/><rect x="1188.9" y="403.0" width="4.41" height="2.21" fill="#a00000" opacity="0.2"/><rect x="889.2" y="460.5" width="4.41" height="2.21" fill="#a00000" opacity="0.55"/><rect x="818.8" y="217.0" width="4.41" height="2.21" fill="#a00000" opacity="0.2"/><rect x="787.9" y="460.5" width="4.41" height="2.21" fill="#a00000" opacity="0.3"/><rect x="748.2" y="163.9" width="4.41" height="2.21" fill="#a00000" opacity="0.4"/><rect x="770.3" y="234.8" width="4.41" height="2.21" fill="#a00000" opacity="0.3"/><rect x="1105.2" y="562.4" width="4.41" height="2.21" fill="#a00000" opacity="0.2"/><rect x="1232.9" y="542.4" width="4.41" height="2.21" fill="#a00000" opacity="0.3"/><rect x="1047.9" y="194.9" width="4.41" height="2.21" fill="#a00000" opacity="0.4"/><rect x="1250.6" y="201.6" width="4.41" height="2.21" fill="#a00000" opacity="0.4"/><rect x="1136.0" y="356.5" width="4.41" height="2.21" fill="#a00000" opacity="0.15"/><rect x="906.9" y="462.8" width="4.41" height="2.21" fill="#a00000" opacity="0.15"/><rect x="739.4" y="163.9" width="4.41" height="2.21" fill="#a00000" opacity="0.3"/><rect x="876.0" y="203.8" width="4.41" height="2.21" fill="#a00000" opacity="0.3"/><rect x="1153.6" y="502.6" width="4.41" height="2.21" fill="#a00000" opacity="0.2"/><rect x="1171.2" y="312.2" width="4.41" height="2.21" fill="#a00000" opacity="0.2"/><rect x="1021.4" y="438.4" width="4.41" height="2.21" fill="#a00000" opacity="0.55"/><rect x="1162.4" y="524.7" width="4.41" height="2.21" fill="#a00000" opacity="0.2"/><rect x="884.8" y="148.4" width="4.41" height="2.21" fill="#a00000" opacity="0.3"/><rect x="1047.9" y="453.9" width="4.41" height="2.21" fill="#a00000" opacity="0.15"/><rect x="1259.4" y="414.1" width="4.41" height="2.21" fill="#a00000" opacity="0.3"/><rect x="770.3" y="376.4" width="4.41" height="2.21" fill="#a00000" opacity="0.15"/><rect x="1021.4" y="243.6" width="4.41" height="2.21" fill="#a00000" opacity="0.15"/><rect x="730.6" y="489.3" width="4.41" height="2.21" fill="#a00000" opacity="0.55"/><rect x="986.2" y="484.9" width="4.41" height="2.21" fill="#a00000" opacity="0.15"/><rect x="1003.8" y="287.9" width="4.41" height="2.21" fill="#a00000" opacity="0.2"/><rect x="950.9" y="531.4" width="4.41" height="2.21" fill="#a00000" opacity="0.2"/><rect x="876.0" y="420.7" width="4.41" height="2.21" fill="#a00000" opacity="0.3"/><rect x="1171.2" y="334.4" width="4.41" height="2.21" fill="#a00000" opacity="0.3"/><rect x="959.8" y="476.0" width="4.41" height="2.21" fill="#a00000" opacity="0.4"/><rect x="770.3" y="566.8" width="4.41" height="2.21" fill="#a00000" opacity="0.4"/><rect x="1065.5" y="478.2" width="4.41" height="2.21" fill="#a00000" opacity="0.15"/><rect x="783.5" y="177.2" width="4.41" height="2.21" fill="#a00000" opacity="0.2"/><rect x="840.8" y="248.0" width="4.41" height="2.21" fill="#a00000" opacity="0.15"/><rect x="1202.1" y="303.4" width="4.41" height="2.21" fill="#a00000" opacity="0.2"/><rect x="1109.6" y="239.2" width="4.41" height="2.21" fill="#a00000" opacity="0.15"/><rect x="1122.8" y="332.2" width="4.41" height="2.21" fill="#a00000" opacity="0.3"/><rect x="1224.1" y="557.9" width="4.41" height="2.21" fill="#a00000" opacity="0.55"/><rect x="942.1" y="462.8" width="4.41" height="2.21" fill="#a00000" opacity="0.4"/><rect x="1030.2" y="429.5" width="4.41" height="2.21" fill="#a00000" opacity="0.15"/><rect x="893.7" y="555.7" width="4.41" height="2.21" fill="#a00000" opacity="0.15"/><rect x="1228.5" y="449.5" width="4.41" height="2.21" fill="#a00000" opacity="0.4"/><rect x="761.5" y="214.8" width="4.41" height="2.21" fill="#a00000" opacity="0.4"/><rect x="726.2" y="555.7" width="4.41" height="2.21" fill="#a00000" opacity="0.3"/><rect x="1206.5" y="272.4" width="4.41" height="2.21" fill="#a00000" opacity="0.55"/><rect x="871.6" y="515.9" width="4.41" height="2.21" fill="#a00000" opacity="0.2"/><rect x="752.7" y="301.2" width="4.41" height="2.21" fill="#a00000" opacity="0.55"/><rect x="928.9" y="206.0" width="4.41" height="2.21" fill="#a00000" opacity="0.3"/><rect x="1259.4" y="476.0" width="4.41" height="2.21" fill="#a00000" opacity="0.15"/><rect x="1012.6" y="287.9" width="4.41" height="2.21" fill="#a00000" opacity="0.4"/><rect x="1255.0" y="241.4" width="4.41" height="2.21" fill="#a00000" opacity="0.55"/><rect x="1202.1" y="380.8" width="4.41" height="2.21" fill="#a00000" opacity="0.2"/><rect x="840.8" y="544.7" width="4.41" height="2.21" fill="#a00000" opacity="0.2"/><rect x="1149.2" y="144.0" width="4.41" height="2.21" fill="#a00000" opacity="0.4"/><rect x="845.2" y="560.1" width="4.41" height="2.21" fill="#a00000" opacity="0.3"/><rect x="915.7" y="294.5" width="4.41" height="2.21" fill="#a00000" opacity="0.2"/><rect x="955.3" y="279.0" width="4.41" height="2.21" fill="#a00000" opacity="0.15"/><rect x="1043.5" y="434.0" width="4.41" height="2.21" fill="#a00000" opacity="0.2"/><rect x="1180.1" y="190.5" width="4.41" height="2.21" fill="#a00000" opacity="0.2"/><rect x="1175.7" y="252.5" width="4.41" height="2.21" fill="#a00000" opacity="0.2"/><rect x="757.1" y="449.5" width="4.41" height="2.21" fill="#a00000" opacity="0.2"/><rect x="792.3" y="551.3" width="4.41" height="2.21" fill="#a00000" opacity="0.15"/><rect x="713.0" y="245.8" width="4.41" height="2.21" fill="#a00000" opacity="0.3"/><rect x="752.7" y="560.1" width="4.41" height="2.21" fill="#a00000" opacity="0.55"/><rect x="739.4" y="434.0" width="4.41" height="2.21" fill="#a00000" opacity="0.4"/><rect x="1078.7" y="469.4" width="4.41" height="2.21" fill="#a00000" opacity="0.4"/><rect x="801.1" y="270.2" width="4.41" height="2.21" fill="#a00000" opacity="0.3"/><rect x="779.1" y="219.3" width="4.41" height="2.21" fill="#a00000" opacity="0.15"/><rect x="818.8" y="177.2" width="4.41" height="2.21" fill="#a00000" opacity="0.2"/><rect x="832.0" y="190.5" width="4.41" height="2.21" fill="#a00000" opacity="0.2"/><rect x="867.2" y="192.7" width="4.41" height="2.21" fill="#a00000" opacity="0.4"/><rect x="1012.6" y="425.1" width="4.41" height="2.21" fill="#a00000" opacity="0.4"/><rect x="761.5" y="168.3" width="4.41" height="2.21" fill="#a00000" opacity="0.55"/><rect x="902.5" y="146.2" width="4.41" height="2.21" fill="#a00000" opacity="0.3"/><rect x="1246.2" y="144.0" width="4.41" height="2.21" fill="#a00000" opacity="0.55"/><rect x="1162.4" y="279.0" width="4.41" height="2.21" fill="#a00000" opacity="0.3"/><rect x="748.2" y="329.9" width="4.41" height="2.21" fill="#a00000" opacity="0.55"/><rect x="911.3" y="418.5" width="4.41" height="2.21" fill="#a00000" opacity="0.3"/><rect x="809.9" y="259.1" width="4.41" height="2.21" fill="#a00000" opacity="0.3"/><rect x="1065.5" y="504.8" width="4.41" height="2.21" fill="#a00000" opacity="0.55"/><rect x="1061.1" y="310.0" width="4.41" height="2.21" fill="#a00000" opacity="0.2"/><rect x="1184.5" y="279.0" width="4.41" height="2.21" fill="#a00000" opacity="0.15"/><rect x="774.7" y="186.1" width="4.41" height="2.21" fill="#a00000" opacity="0.3"/><rect x="1158.0" y="500.4" width="4.41" height="2.21" fill="#a00000" opacity="0.55"/><rect x="1136.0" y="533.6" width="4.41" height="2.21" fill="#a00000" opacity="0.4"/><rect x="959.8" y="471.6" width="4.41" height="2.21" fill="#a00000" opacity="0.15"/><rect x="889.2" y="270.2" width="4.41" height="2.21" fill="#a00000" opacity="0.2"/><rect x="1188.9" y="535.8" width="4.41" height="2.21" fill="#a00000" opacity="0.15"/><rect x="814.3" y="396.3" width="4.41" height="2.21" fill="#a00000" opacity="0.55"/><rect x="770.3" y="414.1" width="4.41" height="2.21" fill="#a00000" opacity="0.3"/><rect x="796.7" y="363.1" width="4.41" height="2.21" fill="#a00000" opacity="0.15"/><rect x="964.2" y="161.7" width="4.41" height="2.21" fill="#a00000" opacity="0.3"/><rect x="911.3" y="445.0" width="4.41" height="2.21" fill="#a00000" opacity="0.4"/><rect x="779.1" y="542.4" width="4.41" height="2.21" fill="#a00000" opacity="0.55"/><rect x="1003.8" y="237.0" width="4.41" height="2.21" fill="#a00000" opacity="0.2"/><rect x="1096.3" y="230.3" width="4.41" height="2.21" fill="#a00000" opacity="0.2"/><rect x="889.2" y="354.3" width="4.41" height="2.21" fill="#a00000" opacity="0.4"/><rect x="889.2" y="555.7" width="4.41" height="2.21" fill="#a00000" opacity="0.4"/><rect x="739.4" y="168.3" width="4.41" height="2.21" fill="#a00000" opacity="0.2"/><rect x="1193.3" y="274.6" width="4.41" height="2.21" fill="#a00000" opacity="0.55"/><rect x="1228.5" y="159.5" width="4.41" height="2.21" fill="#a00000" opacity="0.55"/><rect x="1255.0" y="250.2" width="4.41" height="2.21" fill="#a00000" opacity="0.2"/><rect x="1219.7" y="449.5" width="4.41" height="2.21" fill="#a00000" opacity="0.4"/><rect x="796.7" y="199.3" width="4.41" height="2.21" fill="#a00000" opacity="0.4"/><rect x="1105.2" y="507.0" width="4.41" height="2.21" fill="#a00000" opacity="0.55"/><rect x="1184.5" y="334.4" width="4.41" height="2.21" fill="#a00000" opacity="0.15"/><rect x="1047.9" y="329.9" width="4.41" height="2.21" fill="#a00000" opacity="0.2"/><rect x="730.6" y="343.2" width="4.41" height="2.21" fill="#a00000" opacity="0.55"/><rect x="1228.5" y="307.8" width="4.41" height="2.21" fill="#a00000" opacity="0.55"/><rect x="986.2" y="256.9" width="4.41" height="2.21" fill="#a00000" opacity="0.15"/><rect x="898.1" y="482.7" width="4.41" height="2.21" fill="#a00000" opacity="0.15"/><rect x="765.9" y="354.3" width="4.41" height="2.21" fill="#a00000" opacity="0.15"/><rect x="964.2" y="183.8" width="4.41" height="2.21" fill="#a00000" opacity="0.55"/><rect x="814.3" y="254.7" width="4.41" height="2.21" fill="#a00000" opacity="0.4"/><rect x="836.4" y="336.6" width="4.41" height="2.21" fill="#a00000" opacity="0.2"/><rect x="1069.9" y="484.9" width="4.41" height="2.21" fill="#a00000" opacity="0.15"/><rect x="854.0" y="462.8" width="4.41" height="2.21" fill="#a00000" opacity="0.2"/><rect x="1232.9" y="228.1" width="4.41" height="2.21" fill="#a00000" opacity="0.3"/><rect x="1017.0" y="203.8" width="4.41" height="2.21" fill="#a00000" opacity="0.3"/><rect x="1259.4" y="276.8" width="4.41" height="2.21" fill="#a00000" opacity="0.2"/><rect x="1197.7" y="447.3" width="4.41" height="2.21" fill="#a00000" opacity="0.55"/><rect x="1012.6" y="427.3" width="4.41" height="2.21" fill="#a00000" opacity="0.2"/><rect x="911.3" y="524.7" width="4.41" height="2.21" fill="#a00000" opacity="0.55"/><rect x="1162.4" y="496.0" width="4.41" height="2.21" fill="#a00000" opacity="0.4"/><rect x="1171.2" y="316.7" width="4.41" height="2.21" fill="#a00000" opacity="0.2"/><rect x="1153.6" y="150.6" width="4.41" height="2.21" fill="#a00000" opacity="0.4"/><rect x="849.6" y="478.2" width="4.41" height="2.21" fill="#a00000" opacity="0.15"/><rect x="809.9" y="144.0" width="4.41" height="2.21" fill="#a00000" opacity="0.3"/><rect x="920.1" y="155.1" width="4.41" height="2.21" fill="#a00000" opacity="0.4"/><rect x="854.0" y="416.3" width="4.41" height="2.21" fill="#a00000" opacity="0.3"/><rect x="1149.2" y="318.9" width="4.41" height="2.21" fill="#a00000" opacity="0.55"/><rect x="1100.8" y="358.7" width="4.41" height="2.21" fill="#a00000" opacity="0.3"/><rect x="1105.2" y="261.3" width="4.41" height="2.21" fill="#a00000" opacity="0.4"/><rect x="880.4" y="509.2" width="4.41" height="2.21" fill="#a00000" opacity="0.4"/><rect x="1069.9" y="360.9" width="4.41" height="2.21" fill="#a00000" opacity="0.2"/><rect x="858.4" y="208.2" width="4.41" height="2.21" fill="#a00000" opacity="0.4"/><rect x="871.6" y="533.6" width="4.41" height="2.21" fill="#a00000" opacity="0.3"/><rect x="730.6" y="360.9" width="4.41" height="2.21" fill="#a00000" opacity="0.4"/><rect x="796.7" y="544.7" width="4.41" height="2.21" fill="#a00000" opacity="0.2"/><rect x="735.0" y="400.8" width="4.41" height="2.21" fill="#a00000" opacity="0.3"/><rect x="801.1" y="276.8" width="4.41" height="2.21" fill="#a00000" opacity="0.55"/><rect x="735.0" y="228.1" width="4.41" height="2.21" fill="#a00000" opacity="0.55"/><rect x="973.0" y="411.8" width="4.41" height="2.21" fill="#a00000" opacity="0.3"/><rect x="840.8" y="425.1" width="4.41" height="2.21" fill="#a00000" opacity="0.2"/><rect x="1180.1" y="420.7" width="4.41" height="2.21" fill="#a00000" opacity="0.4"/><rect x="717.4" y="250.2" width="4.41" height="2.21" fill="#a00000" opacity="0.4"/><rect x="1118.4" y="425.1" width="4.41" height="2.21" fill="#a00000" opacity="0.15"/><rect x="801.1" y="272.4" width="4.41" height="2.21" fill="#a00000" opacity="0.4"/><rect x="871.6" y="529.2" width="4.41" height="2.21" fill="#a00000" opacity="0.15"/><rect x="1109.6" y="453.9" width="4.41" height="2.21" fill="#a00000" opacity="0.15"/><rect x="840.8" y="294.5" width="4.41" height="2.21" fill="#a00000" opacity="0.15"/><rect x="840.8" y="496.0" width="4.41" height="2.21" fill="#a00000" opacity="0.2"/><rect x="1109.6" y="254.7" width="4.41" height="2.21" fill="#a00000" opacity="0.4"/><rect x="1078.7" y="336.6" width="4.41" height="2.21" fill="#a00000" opacity="0.2"/><rect x="959.8" y="535.8" width="4.41" height="2.21" fill="#a00000" opacity="0.3"/><rect x="721.8" y="274.6" width="4.41" height="2.21" fill="#a00000" opacity="0.3"/><rect x="1136.0" y="148.4" width="4.41" height="2.21" fill="#a00000" opacity="0.4"/><rect x="964.2" y="234.8" width="4.41" height="2.21" fill="#a00000" opacity="0.15"/><rect x="845.2" y="436.2" width="4.41" height="2.21" fill="#a00000" opacity="0.55"/><rect x="1215.3" y="526.9" width="4.41" height="2.21" fill="#a00000" opacity="0.55"/><rect x="858.4" y="427.3" width="4.41" height="2.21" fill="#a00000" opacity="0.4"/><rect x="1193.3" y="310.0" width="4.41" height="2.21" fill="#a00000" opacity="0.4"/><rect x="787.9" y="334.4" width="4.41" height="2.21" fill="#a00000" opacity="0.2"/><rect x="770.3" y="511.4" width="4.41" height="2.21" fill="#a00000" opacity="0.15"/><rect x="1114.0" y="212.6" width="4.41" height="2.21" fill="#a00000" opacity="0.4"/><rect x="1224.1" y="261.3" width="4.41" height="2.21" fill="#a00000" opacity="0.2"/><rect x="871.6" y="274.6" width="4.41" height="2.21" fill="#a00000" opacity="0.2"/><rect x="1215.3" y="201.6" width="4.41" height="2.21" fill="#a00000" opacity="0.3"/><rect x="1003.8" y="292.3" width="4.41" height="2.21" fill="#a00000" opacity="0.4"/><rect x="779.1" y="199.3" width="4.41" height="2.21" fill="#a00000" opacity="0.15"/><rect x="1215.3" y="292.3" width="4.41" height="2.21" fill="#a00000" opacity="0.4"/><rect x="1122.8" y="354.3" width="4.41" height="2.21" fill="#a00000" opacity="0.55"/><rect x="928.9" y="453.9" width="4.41" height="2.21" fill="#a00000" opacity="0.4"/><rect x="1215.3" y="535.8" width="4.41" height="2.21" fill="#a00000" opacity="0.15"/><rect x="721.8" y="493.7" width="4.41" height="2.21" fill="#a00000" opacity="0.4"/><rect x="1175.7" y="168.3" width="4.41" height="2.21" fill="#a00000" opacity="0.15"/><rect x="1228.5" y="321.1" width="4.41" height="2.21" fill="#a00000" opacity="0.2"/><rect x="876.0" y="546.9" width="4.41" height="2.21" fill="#a00000" opacity="0.3"/><rect x="1241.8" y="192.7" width="4.41" height="2.21" fill="#a00000" opacity="0.15"/><rect x="730.6" y="323.3" width="4.41" height="2.21" fill="#a00000" opacity="0.3"/>
<rect x="1027.0" y="329.1" width="4.41" height="2.21" fill="#000" opacity="0.25"/>
<rect x="976.9" y="359.9" width="4.41" height="2.21" fill="#000" opacity="0.25"/>
<rect x="1054.3" y="355.3" width="4.41" height="2.21" fill="#000" opacity="0.4"/>
<rect x="988.9" y="341.7" width="4.41" height="2.21" fill="#000" opacity="0.4"/>
<rect x="1066.0" y="334.3" width="4.41" height="2.21" fill="#000" opacity="0.15"/>
<rect x="944.0" y="310.9" width="4.41" height="2.21" fill="#000" opacity="0.15"/>
<rect x="943.4" y="315.1" width="4.41" height="2.21" fill="#000" opacity="0.25"/>
<rect x="974.3" y="386.8" width="4.41" height="2.21" fill="#000" opacity="0.15"/>
<rect x="1067.5" y="370.5" width="4.41" height="2.21" fill="#000" opacity="0.15"/>
<rect x="956.3" y="164.9" width="4.41" height="2.21" fill="#ffe820"/>
<rect x="970.3" y="212.4" width="4.41" height="2.21" fill="#ffe820"/>
<rect x="1176.3" y="269.4" width="4.41" height="2.21" fill="#ffffe0"/>
<rect x="1180.3" y="439.4" width="4.41" height="2.21" fill="#ffffff"/>
<rect x="765.3" y="172.4" width="4.41" height="2.21" fill="#ff7000"/>
<rect x="875.3" y="246.9" width="4.41" height="2.21" fill="#ff6000"/>
<rect x="1008.8" y="512.9" width="4.41" height="2.21" fill="#ff7800"/>
<rect x="1085.3" y="345.4" width="4.41" height="2.21" fill="#ffd820"/>
<rect x="1065.8" y="334.4" width="4.41" height="2.21" fill="#ff8000"/>
<rect x="1051.8" y="153.9" width="4.41" height="2.21" fill="#ff1000"/>
<rect x="1085.3" y="185.4" width="4.41" height="2.21" fill="#ff2000"/>
<rect x="855.3" y="179.4" width="4.41" height="2.21" fill="#e00800"/>
<rect x="731.8" y="187.4" width="4.41" height="2.21" fill="#d00800"/>
<rect x="1209.3" y="296.4" width="4.41" height="2.21" fill="#ff1000"/>
<rect x="1266.3" y="286.4" width="4.41" height="2.21" fill="#e80800"/>
<rect x="803.8" y="282.4" width="4.41" height="2.21" fill="#d00800"/>
<rect x="756.3" y="338.4" width="4.41" height="2.21" fill="#d00800"/>
<rect x="817.8" y="376.4" width="4.41" height="2.21" fill="#e80800"/>
<rect x="784.3" y="378.4" width="4.41" height="2.21" fill="#d00800"/>
<rect x="822.8" y="418.4" width="4.41" height="2.21" fill="#e00800"/>
<rect x="722.8" y="435.4" width="4.41" height="2.21" fill="#e00800"/>
<rect x="875.3" y="428.9" width="4.41" height="2.21" fill="#d00800"/>
<rect x="922.8" y="420.4" width="4.41" height="2.21" fill="#ff1000"/>
<rect x="1013.3" y="428.9" width="4.41" height="2.21" fill="#ff1000"/>
<rect x="917.8" y="479.4" width="4.41" height="2.21" fill="#f00800"/>
<rect x="1017.8" y="481.4" width="4.41" height="2.21" fill="#e00800"/>
<rect x="980.3" y="504.4" width="4.41" height="2.21" fill="#e00800"/>
<rect x="841.8" y="515.4" width="4.41" height="2.21" fill="#ff3000"/>
<rect x="799.3" y="523.4" width="4.41" height="2.21" fill="#e00800"/>
<rect x="1099.3" y="527.4" width="4.41" height="2.21" fill="#ff2000"/>
<rect x="1065.8" y="538.4" width="4.41" height="2.21" fill="#ff2800"/>
<rect x="1156.8" y="527.4" width="4.41" height="2.21" fill="#e80800"/>
<rect x="1251.8" y="475.4" width="4.41" height="2.21" fill="#ff1000"/>
<rect x="713.8" y="552.4" width="4.41" height="2.21" fill="#e80800"/>
<rect x="1146.3" y="557.4" width="4.41" height="2.21" fill="#e00800"/>
<rect x="1114.3" y="395.4" width="4.41" height="2.21" fill="#e00800"/>
<rect x="1117.8" y="322.4" width="4.41" height="2.21" fill="#c00000"/>
<rect x="1041.8" y="242.4" width="4.41" height="2.21" fill="#e81000"/>
<rect x="1152.8" y="204.4" width="4.41" height="2.21" fill="#c00000"/>
<rect x="884.3" y="217.4" width="4.41" height="2.21" fill="#c00000"/>
<rect x="850.3" y="460.4" width="4.41" height="2.21" fill="#c00000"/>
<rect x="879.3" y="506.4" width="4.41" height="2.21" fill="#c80000"/>
<rect x="1075.3" y="460.4" width="4.41" height="2.21" fill="#c00000"/>
<rect x="1208.8" y="538.4" width="4.41" height="2.21" fill="#d00000"/>
<rect x="1107.8" y="170.4" width="4.41" height="2.21" fill="#c00000"/>
<rect x="793.8" y="181.4" width="4.41" height="2.21" fill="#c00000"/>
<rect x="850.3" y="202.4" width="4.41" height="2.21" fill="#c00000"/>
</g>
<rect x="6" y="616" width="644" height="46" fill="#ffffff" />
<rect x="8" y="618" width="640" height="42" fill="#eeeeee" />
<text x="202.77" y="645.00" font-size="18" font-weight="bold" fill="#0000ff" textLength="251.87" lengthAdjust="spacingAndGlyphs" >HORIZONTAL EMITTANCE</text>
<rect x="650" y="616" width="644" height="46" fill="#ffffff" />
<rect x="652" y="618" width="640" height="42" fill="#eeeeee" />
<text x="846.77" y="645.00" font-size="18" font-weight="bold" fill="#ff0000" textLength="251.87" lengthAdjust="spacingAndGlyphs" >HORIZONTAL EMITTANCE</text>
<rect x="6" y="862" width="644" height="46" fill="#ffffff" />
<rect x="8" y="864" width="640" height="42" fill="#eeeeee" />
<text x="219.64" y="891.00" font-size="18" font-weight="bold" fill="#0000ff" textLength="218.11" lengthAdjust="spacingAndGlyphs" >VERTICAL EMITTANCE</text>
<rect x="650" y="862" width="644" height="46" fill="#ffffff" />
<rect x="652" y="864" width="640" height="42" fill="#eeeeee" />
<text x="863.64" y="891.00" font-size="18" font-weight="bold" fill="#ff0000" textLength="218.11" lengthAdjust="spacingAndGlyphs" >VERTICAL EMITTANCE</text>
<rect x="46" y="669" width="585" height="151" fill="#ffffff" />
<rect x="127" y="669" width="1" height="150" fill="#c4c4c4" />
<rect x="209" y="669" width="1" height="150" fill="#c4c4c4" />
<rect x="291" y="669" width="1" height="150" fill="#c4c4c4" />
<rect x="373" y="669" width="1" height="150" fill="#c4c4c4" />
<rect x="454" y="669" width="1" height="150" fill="#c4c4c4" />
<rect x="536" y="669" width="1" height="150" fill="#c4c4c4" />
<rect x="618" y="669" width="1" height="150" fill="#c4c4c4" />
<rect x="46" y="812" width="584" height="1" fill="#c4c4c4" />
<rect x="46" y="782" width="584" height="1" fill="#c4c4c4" />
<rect x="46" y="753" width="584" height="1" fill="#c4c4c4" />
<rect x="46" y="723" width="584" height="1" fill="#c4c4c4" />
<rect x="46" y="694" width="584" height="1" fill="#c4c4c4" />
<rect x="398" y="669" width="3" height="150" fill="#dcdcf0" />
<path d="M47.0 812.6V720.0H48.0V720.0H49.0V720.0H50.0V725.0H51.0V725.0H52.0V812.6ZM57.0 812.6V743.8H58.1V741.2H59.1V739.5H60.2V738.0H61.3V736.2H62.3V734.5H63.4V732.5H64.5V728.0H65.5V721.2H66.6V710.0H67.7V698.0H68.7V698.0H69.8V698.0H70.9V705.0H71.9V705.0H73.0V812.6ZM75.0 812.6V708.8H76.0V708.8H77.1V706.2H78.1V675.0H79.2V675.0H80.2V675.0H81.3V681.2H82.3V690.0H83.4V695.0H84.4V701.2H85.5V725.0H86.5V727.0H87.5V727.0H88.6V727.0H89.6V728.0H90.7V730.0H91.7V732.5H92.8V732.5H93.8V732.5H94.9V732.5H95.9V732.5H97.0V734.5H98.0V812.6ZM100.0 812.6V733.8H101.0V733.8H102.1V733.8H103.1V730.0H104.2V729.5H105.2V729.5H106.3V730.5H107.3V731.2H108.4V731.2H109.4V733.0H110.5V733.0H111.5V733.0H112.5V727.5H113.6V727.0H114.6V727.0H115.7V733.8H116.7V733.8H117.8V733.8H118.8V733.8H119.9V731.2H120.9V731.2H122.0V731.2H123.0V812.6ZM125.0 812.6V738.8H126.0V738.0H127.1V736.2H128.1V734.5H129.2V733.8H130.2V732.5H131.3V729.5H132.3V729.5H133.4V735.0H134.4V740.0H135.5V739.5H136.5V735.0H137.5V735.0H138.6V735.0H139.6V738.0H140.7V738.0H141.7V738.0H142.8V736.2H143.8V736.2H144.9V736.2H145.9V736.2H147.0V736.2H148.0V812.6ZM150.0 812.6V742.0H151.0V741.2H152.1V739.5H153.1V737.5H154.2V737.5H155.2V740.5H156.3V740.5H157.3V741.2H158.4V742.0H159.4V742.0H160.5V742.5H161.5V743.0H162.5V742.5H163.6V743.8H164.6V743.0H165.7V745.0H166.7V743.0H167.8V743.0H168.8V746.2H169.9V744.5H170.9V744.5H172.0V746.2H173.0V812.6ZM176.0 812.6V749.5H177.0V747.5H178.1V746.2H179.1V746.2H180.2V744.5H181.2V743.8H182.3V743.8H183.3V743.0H184.4V743.8H185.4V743.0H186.5V743.8H187.5V742.5H188.5V743.0H189.6V742.0H190.6V742.0H191.7V741.2H192.7V742.0H193.8V741.2H194.8V740.5H195.9V737.0H196.9V737.0H198.0V737.0H199.0V812.6ZM203.0 812.6V743.8H204.0V742.5H205.0V741.2H206.0V740.0H207.0V739.5H208.0V739.5H209.0V739.5H210.0V739.5H211.0V739.5H212.0V739.5H213.0V739.5H214.0V739.5H215.0V740.0H216.0V740.5H217.0V741.2H218.0V741.2H219.0V812.6ZM221.0 812.6V743.8H222.0V742.5H223.1V740.5H224.1V739.5H225.2V737.5H226.2V737.5H227.3V738.8H228.3V739.5H229.4V739.5H230.4V740.0H231.5V740.5H232.5V740.5H233.5V737.5H234.6V737.5H235.6V740.5H236.7V741.2H237.7V741.2H238.8V740.5H239.8V740.5H240.9V740.0H241.9V740.0H243.0V740.0H244.0V812.6ZM246.0 812.6V746.2H247.0V744.5H248.1V742.5H249.1V740.5H250.2V739.5H251.2V739.5H252.3V739.5H253.3V739.5H254.4V742.5H255.4V742.0H256.5V740.5H257.5V740.5H258.5V740.5H259.6V740.5H260.6V741.2H261.7V741.2H262.7V741.2H263.8V740.5H264.8V740.5H265.9V740.0H266.9V739.5H268.0V739.5H269.0V812.6ZM271.0 812.6V745.0H272.0V743.8H273.1V741.2H274.1V741.2H275.2V739.5H276.2V737.0H277.3V736.2H278.3V736.2H279.4V740.0H280.4V740.0H281.5V740.0H282.5V740.0H283.5V739.5H284.6V739.5H285.6V740.0H286.7V739.5H287.7V740.0H288.8V740.5H289.8V740.5H290.9V741.2H291.9V743.0H293.0V743.0H294.0V812.6ZM296.0 812.6V746.2H297.0V745.5H298.1V744.5H299.1V743.8H300.2V742.5H301.2V742.0H302.3V742.0H303.3V741.5H304.4V741.2H305.4V741.2H306.5V743.8H307.5V743.8H308.5V741.2H309.6V741.2H310.6V743.8H311.7V744.5H312.7V744.5H313.8V743.0H314.8V742.0H315.9V739.5H316.9V739.5H318.0V739.5H319.0V812.6ZM322.0 812.6V747.5H323.0V746.2H324.1V745.0H325.1V744.5H326.2V743.8H327.2V743.0H328.3V742.5H329.3V742.5H330.4V742.0H331.4V742.0H332.5V741.2H333.5V740.5H334.5V739.5H335.6V739.5H336.6V742.0H337.7V742.5H338.7V742.5H339.8V743.0H340.8V743.0H341.9V743.8H342.9V743.8H344.0V743.8H345.0V812.6ZM349.0 812.6V753.0H350.0V750.0H351.0V747.0H352.0V746.2H353.0V744.5H354.0V743.8H355.0V739.5H356.0V739.5H357.0V743.8H358.0V742.5H359.0V742.0H360.0V741.2H361.0V741.2H362.0V738.0H363.0V738.0H364.0V738.0H365.0V812.6ZM367.0 812.6V748.8H368.0V747.0H369.1V745.5H370.1V745.0H371.2V743.8H372.2V743.0H373.3V742.5H374.3V742.5H375.4V742.0H376.4V742.5H377.5V743.8H378.5V743.8H379.5V744.5H380.6V740.5H381.6V740.5H382.7V740.5H383.7V742.0H384.8V742.0H385.8V742.5H386.9V743.8H387.9V744.5H389.0V745.0H390.0V812.6ZM392.0 812.6V746.2H393.0V746.2H394.1V746.2H395.1V746.2H396.2V746.2H397.2V746.2H398.3V746.2H399.3V746.2H400.4V746.2H401.4V746.2H402.5V732.0H403.5V731.2H404.5V730.5H405.6V730.0H406.6V730.5H407.7V732.5H408.7V732.5H409.8V731.2H410.8V731.2H411.9V732.0H412.9V732.5H414.0V732.5H415.0V812.6ZM418.0 812.6V733.0H419.0V733.0H420.1V733.0H421.1V733.0H422.2V733.0H423.2V729.5H424.3V729.5H425.3V729.5H426.4V729.5H427.4V729.5H428.5V728.8H429.5V727.5H430.6V727.5H431.6V727.0H432.7V731.2H433.7V732.5H434.8V737.5H435.8V739.5H436.9V741.2H437.9V741.2H439.0V741.2H440.0V812.6ZM443.0 812.6V743.8H444.0V743.0H445.0V742.0H446.0V739.5H447.0V739.5H448.0V741.2H449.0V742.0H450.0V742.0H451.0V742.5H452.0V743.0H453.0V743.0H454.0V742.5H455.0V742.0H456.0V741.2H457.0V740.5H458.0V740.5H459.0V740.5H460.0V740.5H461.0V740.5H462.0V740.5H463.0V743.8H464.0V743.8H465.0V812.6ZM468.0 812.6V741.2H469.0V741.2H470.1V740.5H471.1V739.5H472.2V739.5H473.2V738.8H474.3V737.5H475.3V737.5H476.4V737.5H477.4V738.8H478.5V738.8H479.5V738.0H480.5V738.8H481.6V737.5H482.6V737.5H483.7V739.5H484.7V740.0H485.8V740.0H486.8V739.5H487.9V738.8H488.9V738.8H490.0V738.8H491.0V812.6ZM496.0 812.6V748.0H497.0V746.2H498.0V745.0H499.0V739.5H500.0V739.5H501.0V739.5H502.0V740.5H503.0V740.5H504.0V740.5H505.0V739.5H506.0V737.5H507.0V737.5H508.0V737.5H509.0V737.5H510.0V737.5H511.0V812.6ZM514.0 812.6V745.0H515.0V744.5H516.1V743.8H517.1V743.8H518.2V743.0H519.2V742.5H520.3V742.5H521.3V742.0H522.4V742.0H523.4V742.5H524.5V742.5H525.5V742.5H526.6V742.0H527.6V741.2H528.7V741.2H529.7V742.0H530.8V742.0H531.8V742.0H532.9V741.2H533.9V741.2H535.0V741.2H536.0V812.6ZM539.0 812.6V747.0H540.0V746.2H541.1V745.0H542.1V745.0H543.2V743.8H544.2V743.8H545.3V743.0H546.3V744.5H547.4V745.0H548.4V745.0H549.5V744.5H550.5V744.5H551.5V741.2H552.6V741.2H553.6V745.0H554.7V745.0H555.7V744.5H556.8V742.0H557.8V742.0H558.9V742.0H559.9V742.0H561.0V742.0H562.0V812.6ZM564.0 812.6V746.2H565.0V745.5H566.1V744.5H567.1V744.5H568.2V743.8H569.2V742.5H570.3V742.0H571.3V743.8H572.4V744.5H573.4V744.5H574.5V743.8H575.5V743.8H576.5V743.0H577.6V743.8H578.6V743.8H579.7V743.8H580.7V744.5H581.8V744.5H582.8V744.5H583.9V745.0H584.9V745.0H586.0V745.0H587.0V812.6ZM589.0 812.6V747.5H590.0V746.2H591.1V745.0H592.1V745.0H593.2V744.5H594.2V743.8H595.3V743.8H596.3V742.5H597.4V743.0H598.4V743.8H599.5V743.8H600.5V743.8H601.5V740.0H602.6V739.5H603.6V739.5H604.7V740.5H605.7V740.5H606.8V740.5H607.8V739.5H608.9V737.5H609.9V737.5H611.0V737.5H612.0V812.6Z" fill="#0000ff" shape-rendering="crispEdges"/>
<rect x="398" y="669" width="1" height="150" fill="#00f000" />
<rect x="401" y="669" width="1" height="150" fill="#00f000" />
<rect x="46.5" y="669.5" width="584" height="150" fill="none" stroke="#000" stroke-width="1.15"/>
<rect x="127" y="820" width="1" height="4" fill="#000" />
<text x="110.80" y="839.00" font-size="12" font-weight="bold" fill="#000" textLength="33.40" lengthAdjust="spacingAndGlyphs" >5000</text>
<rect x="209" y="820" width="1" height="4" fill="#000" />
<text x="188.62" y="839.00" font-size="12" font-weight="bold" fill="#000" textLength="41.75" lengthAdjust="spacingAndGlyphs" >10000</text>
<rect x="291" y="820" width="1" height="4" fill="#000" />
<text x="270.62" y="839.00" font-size="12" font-weight="bold" fill="#000" textLength="41.75" lengthAdjust="spacingAndGlyphs" >15000</text>
<rect x="373" y="820" width="1" height="4" fill="#000" />
<text x="352.62" y="839.00" font-size="12" font-weight="bold" fill="#000" textLength="41.75" lengthAdjust="spacingAndGlyphs" >20000</text>
<rect x="454" y="820" width="1" height="4" fill="#000" />
<text x="433.62" y="839.00" font-size="12" font-weight="bold" fill="#000" textLength="41.75" lengthAdjust="spacingAndGlyphs" >25000</text>
<rect x="536" y="820" width="1" height="4" fill="#000" />
<text x="515.62" y="839.00" font-size="12" font-weight="bold" fill="#000" textLength="41.75" lengthAdjust="spacingAndGlyphs" >30000</text>
<rect x="618" y="820" width="1" height="4" fill="#000" />
<text x="597.62" y="839.00" font-size="12" font-weight="bold" fill="#000" textLength="41.75" lengthAdjust="spacingAndGlyphs" >35000</text>
<rect x="41" y="812" width="5" height="1" fill="#000" />
<text x="29.95" y="817.60" font-size="12" font-weight="bold" fill="#000" textLength="8.35" lengthAdjust="spacingAndGlyphs" >0</text>
<rect x="41" y="782" width="5" height="1" fill="#000" />
<text x="29.95" y="787.60" font-size="12" font-weight="bold" fill="#000" textLength="8.35" lengthAdjust="spacingAndGlyphs" >1</text>
<rect x="41" y="753" width="5" height="1" fill="#000" />
<text x="29.95" y="758.60" font-size="12" font-weight="bold" fill="#000" textLength="8.35" lengthAdjust="spacingAndGlyphs" >2</text>
<rect x="41" y="723" width="5" height="1" fill="#000" />
<text x="29.95" y="728.60" font-size="12" font-weight="bold" fill="#000" textLength="8.35" lengthAdjust="spacingAndGlyphs" >3</text>
<rect x="41" y="694" width="5" height="1" fill="#000" />
<text x="29.95" y="699.60" font-size="12" font-weight="bold" fill="#000" textLength="8.35" lengthAdjust="spacingAndGlyphs" >4</text>
<text x="318.56" y="858.00" font-size="12" font-weight="bold" fill="#000" textLength="41.89" lengthAdjust="spacingAndGlyphs" >Bunch</text>
<g transform="translate(24.2,743.5) rotate(-90)">
<text x="-34.09" y="0.00" font-size="12" font-weight="bold" fill="#000" textLength="68.18" lengthAdjust="spacingAndGlyphs" >Emittance</text>
</g>
<text x="384.80" y="750.00" font-size="12" font-weight="bold" fill="#000" textLength="32.40" lengthAdjust="spacingAndGlyphs" >Scan</text>
<rect x="703" y="669" width="572" height="151" fill="#ffffff" />
<rect x="782" y="669" width="1" height="150" fill="#c4c4c4" />
<rect x="862" y="669" width="1" height="150" fill="#c4c4c4" />
<rect x="942" y="669" width="1" height="150" fill="#c4c4c4" />
<rect x="1022" y="669" width="1" height="150" fill="#c4c4c4" />
<rect x="1102" y="669" width="1" height="150" fill="#c4c4c4" />
<rect x="1182" y="669" width="1" height="150" fill="#c4c4c4" />
<rect x="1262" y="669" width="1" height="150" fill="#c4c4c4" />
<rect x="703" y="812" width="571" height="1" fill="#c4c4c4" />
<rect x="703" y="788" width="571" height="1" fill="#c4c4c4" />
<rect x="703" y="764" width="571" height="1" fill="#c4c4c4" />
<rect x="703" y="740" width="571" height="1" fill="#c4c4c4" />
<rect x="703" y="717" width="571" height="1" fill="#c4c4c4" />
<rect x="703" y="693" width="571" height="1" fill="#c4c4c4" />
<rect x="703" y="669" width="571" height="1" fill="#c4c4c4" />
<rect x="724" y="669" width="2" height="150" fill="#dcdcf0" />
<path d="M704.0 812.6V675.0H705.0V675.0H706.0V679.5H707.0V812.6ZM714.0 812.6V708.8H715.0V707.5H716.0V706.2H717.0V706.2H718.0V707.0H719.0V707.0H720.0V707.0H721.0V701.2H722.0V701.2H723.0V701.2H724.0V703.8H725.0V704.5H726.0V704.5H727.0V704.5H728.0V704.5H729.0V812.6ZM731.0 812.6V718.0H732.0V713.8H733.0V711.2H734.0V706.2H735.0V706.2H736.0V707.0H737.0V707.0H738.0V707.5H739.0V707.5H740.0V707.0H741.0V706.2H742.0V706.2H743.0V705.0H744.0V704.5H745.0V704.5H746.0V706.2H747.0V706.2H748.0V706.2H749.0V707.5H750.0V708.8H751.0V710.0H752.0V712.0H753.0V712.0H754.0V812.6ZM756.0 812.6V710.0H757.0V709.5H758.0V708.0H759.0V707.5H760.0V706.2H761.0V706.2H762.0V705.5H763.0V705.5H764.0V705.5H765.0V705.5H766.0V706.2H767.0V706.2H768.0V708.8H769.0V708.8H770.0V708.8H771.0V705.5H772.0V705.5H773.0V705.5H774.0V708.8H775.0V708.8H776.0V708.8H777.0V708.8H778.0V812.6ZM780.0 812.6V710.0H781.0V708.8H782.0V708.0H783.0V708.0H784.0V710.0H785.0V710.0H786.0V708.0H787.0V708.0H788.0V708.0H789.0V709.5H790.0V709.5H791.0V709.5H792.0V708.0H793.0V705.0H794.0V705.0H795.0V705.0H796.0V708.8H797.0V708.8H798.0V709.5H799.0V710.0H800.0V710.0H801.0V711.2H802.0V711.2H803.0V812.6ZM805.0 812.6V711.2H806.0V708.8H807.0V706.2H808.0V702.5H809.0V702.5H810.0V706.2H811.0V708.8H812.0V710.0H813.0V708.8H814.0V708.0H815.0V708.0H816.0V708.0H817.0V708.8H818.0V708.8H819.0V705.5H820.0V705.5H821.0V705.5H822.0V708.0H823.0V708.8H824.0V710.0H825.0V711.2H826.0V712.0H827.0V812.6ZM830.0 812.6V717.5H831.0V712.5H832.0V711.2H833.0V701.2H834.0V701.2H835.0V701.2H836.0V708.8H837.0V708.8H838.0V702.0H839.0V702.0H840.0V703.0H841.0V703.0H842.0V703.8H843.0V705.5H844.0V697.0H845.0V697.0H846.0V697.0H847.0V700.0H848.0V700.0H849.0V700.0H850.0V705.0H851.0V705.0H852.0V812.6ZM857.0 812.6V716.2H858.0V713.8H859.0V712.5H860.0V710.0H861.0V709.5H862.0V709.5H863.0V705.5H864.0V705.5H865.0V705.5H866.0V706.2H867.0V706.2H868.0V706.2H869.0V708.0H870.0V708.0H871.0V708.0H872.0V812.6ZM874.0 812.6V718.8H875.0V716.2H876.0V713.0H877.0V711.2H878.0V710.0H879.0V709.5H880.0V708.8H881.0V707.5H882.0V706.2H883.0V706.2H884.0V710.0H885.0V710.0H886.0V710.5H887.0V710.5H888.0V710.0H889.0V704.5H890.0V704.5H891.0V704.5H892.0V708.8H893.0V708.8H894.0V710.0H895.0V711.2H896.0V711.2H897.0V812.6ZM899.0 812.6V713.8H900.0V711.2H901.0V710.0H902.0V710.0H903.0V710.5H904.0V710.5H905.0V709.5H906.0V708.8H907.0V706.2H908.0V706.2H909.0V706.2H910.0V710.0H911.0V710.0H912.0V710.0H913.0V708.8H914.0V705.0H915.0V705.0H916.0V711.2H917.0V704.5H918.0V704.5H919.0V704.5H920.0V712.0H921.0V812.6ZM923.0 812.6V713.8H924.0V713.0H925.0V712.5H926.0V711.2H927.0V709.5H928.0V709.5H929.0V709.5H930.0V710.0H931.0V710.0H932.0V711.2H933.0V711.2H934.0V708.8H935.0V708.8H936.0V708.0H937.0V707.5H938.0V707.5H939.0V707.5H940.0V708.8H941.0V710.0H942.0V710.0H943.0V711.2H944.0V712.5H945.0V713.0H946.0V812.6ZM948.0 812.6V717.5H949.0V715.5H950.0V713.8H951.0V712.0H952.0V711.2H953.0V709.5H954.0V708.0H955.0V708.0H956.0V707.5H957.0V707.5H958.0V704.5H959.0V704.5H960.0V704.5H961.0V704.5H962.0V704.5H963.0V708.8H964.0V708.8H965.0V711.2H966.0V712.5H967.0V712.5H968.0V713.8H969.0V713.8H970.0V812.6ZM974.0 812.6V708.8H975.0V708.8H976.0V708.0H977.0V707.5H978.0V707.5H979.0V708.8H980.0V708.8H981.0V708.8H982.0V707.0H983.0V707.0H984.0V708.0H985.0V708.0H986.0V708.0H987.0V708.0H988.0V707.0H989.0V707.0H990.0V707.5H991.0V707.5H992.0V706.2H993.0V706.2H994.0V706.2H995.0V812.6ZM1000.0 812.6V716.2H1001.0V713.8H1002.0V712.5H1003.0V710.0H1004.0V708.8H1005.0V706.2H1006.0V706.2H1007.0V706.2H1008.0V711.2H1009.0V711.2H1010.0V708.8H1011.0V708.8H1012.0V710.0H1013.0V711.2H1014.0V711.2H1015.0V812.6ZM1017.0 812.6V713.8H1018.0V713.0H1019.0V712.0H1020.0V711.2H1021.0V710.5H1022.0V710.5H1023.0V710.5H1024.0V712.5H1025.0V712.5H1026.0V713.0H1027.0V713.0H1028.0V713.0H1029.0V713.0H1030.0V713.8H1031.0V713.8H1032.0V713.8H1033.0V717.5H1034.0V717.5H1035.0V717.0H1036.0V713.0H1037.0V713.0H1038.0V713.0H1039.0V713.0H1040.0V812.6ZM1042.0 812.6V715.5H1043.0V713.8H1044.0V712.5H1045.0V712.5H1046.0V712.0H1047.0V712.0H1048.0V706.2H1049.0V706.2H1050.0V706.2H1051.0V711.2H1052.0V711.2H1053.0V711.2H1054.0V713.8H1055.0V715.5H1056.0V715.0H1057.0V713.8H1058.0V713.0H1059.0V713.0H1060.0V712.5H1061.0V712.5H1062.0V712.5H1063.0V712.5H1064.0V812.6ZM1066.0 812.6V718.0H1067.0V715.0H1068.0V713.0H1069.0V713.0H1070.0V712.5H1071.0V712.5H1072.0V712.5H1073.0V706.2H1074.0V706.2H1075.0V706.2H1076.0V711.2H1077.0V711.2H1078.0V712.5H1079.0V713.8H1080.0V713.8H1081.0V712.5H1082.0V711.2H1083.0V711.2H1084.0V712.5H1085.0V713.0H1086.0V713.8H1087.0V713.8H1088.0V713.8H1089.0V812.6ZM1091.0 812.6V713.8H1092.0V712.5H1093.0V711.2H1094.0V711.2H1095.0V709.5H1096.0V709.5H1097.0V709.5H1098.0V712.0H1099.0V712.0H1100.0V712.0H1101.0V712.0H1102.0V712.0H1103.0V712.0H1104.0V713.0H1105.0V713.8H1106.0V713.8H1107.0V712.0H1108.0V712.0H1109.0V712.0H1110.0V713.8H1111.0V720.0H1112.0V720.0H1113.0V812.6ZM1116.0 812.6V718.0H1117.0V716.2H1118.0V713.8H1119.0V713.0H1120.0V712.5H1121.0V712.5H1122.0V712.5H1123.0V713.0H1124.0V713.0H1125.0V713.8H1126.0V714.5H1127.0V714.5H1128.0V713.0H1129.0V712.0H1130.0V712.0H1131.0V712.0H1132.0V707.0H1133.0V707.0H1134.0V707.0H1135.0V715.5H1136.0V715.5H1137.0V715.5H1138.0V812.6ZM1143.0 812.6V718.0H1144.0V716.2H1145.0V714.5H1146.0V714.5H1147.0V714.5H1148.0V714.5H1149.0V714.5H1150.0V713.8H1151.0V713.0H1152.0V713.0H1153.0V710.0H1154.0V710.0H1155.0V710.0H1156.0V720.0H1157.0V720.0H1158.0V812.6ZM1160.0 812.6V716.2H1161.0V713.8H1162.0V712.5H1163.0V712.5H1164.0V713.8H1165.0V715.5H1166.0V715.5H1167.0V711.2H1168.0V711.2H1169.0V710.0H1170.0V709.5H1171.0V709.5H1172.0V711.2H1173.0V713.0H1174.0V713.0H1175.0V713.8H1176.0V713.8H1177.0V714.5H1178.0V715.5H1179.0V715.5H1180.0V717.5H1181.0V719.5H1182.0V719.5H1183.0V812.6ZM1185.0 812.6V713.8H1186.0V713.8H1187.0V713.0H1188.0V713.0H1189.0V713.0H1190.0V711.2H1191.0V709.5H1192.0V709.5H1193.0V709.5H1194.0V712.5H1195.0V712.5H1196.0V713.8H1197.0V718.0H1198.0V718.0H1199.0V714.5H1200.0V714.5H1201.0V712.5H1202.0V709.5H1203.0V709.5H1204.0V709.5H1205.0V721.2H1206.0V721.2H1207.0V812.6ZM1209.0 812.6V722.5H1210.0V718.8H1211.0V715.5H1212.0V715.5H1213.0V714.5H1214.0V714.5H1215.0V709.5H1216.0V709.5H1217.0V709.5H1218.0V715.0H1219.0V715.0H1220.0V713.8H1221.0V713.8H1222.0V713.8H1223.0V713.0H1224.0V713.0H1225.0V713.8H1226.0V715.0H1227.0V717.0H1228.0V717.0H1229.0V718.0H1230.0V718.0H1231.0V718.0H1232.0V812.6ZM1234.0 812.6V716.2H1235.0V713.8H1236.0V711.2H1237.0V711.2H1238.0V713.0H1239.0V713.0H1240.0V712.5H1241.0V712.5H1242.0V712.5H1243.0V712.5H1244.0V708.0H1245.0V708.0H1246.0V708.0H1247.0V713.8H1248.0V713.8H1249.0V714.5H1250.0V716.2H1251.0V716.2H1252.0V717.0H1253.0V717.5H1254.0V717.5H1255.0V717.5H1256.0V812.6Z" fill="#ff0000" shape-rendering="crispEdges"/>
<rect x="724" y="669" width="1" height="150" fill="#00f000" />
<rect x="726" y="669" width="1" height="150" fill="#00f000" />
<rect x="703.5" y="669.5" width="571" height="150" fill="none" stroke="#000" stroke-width="1.15"/>
<rect x="782" y="820" width="1" height="4" fill="#000" />
<text x="765.80" y="839.00" font-size="12" font-weight="bold" fill="#000" textLength="33.40" lengthAdjust="spacingAndGlyphs" >5000</text>
<rect x="862" y="820" width="1" height="4" fill="#000" />
<text x="841.62" y="839.00" font-size="12" font-weight="bold" fill="#000" textLength="41.75" lengthAdjust="spacingAndGlyphs" >10000</text>
<rect x="942" y="820" width="1" height="4" fill="#000" />
<text x="921.62" y="839.00" font-size="12" font-weight="bold" fill="#000" textLength="41.75" lengthAdjust="spacingAndGlyphs" >15000</text>
<rect x="1022" y="820" width="1" height="4" fill="#000" />
<text x="1001.62" y="839.00" font-size="12" font-weight="bold" fill="#000" textLength="41.75" lengthAdjust="spacingAndGlyphs" >20000</text>
<rect x="1102" y="820" width="1" height="4" fill="#000" />
<text x="1081.62" y="839.00" font-size="12" font-weight="bold" fill="#000" textLength="41.75" lengthAdjust="spacingAndGlyphs" >25000</text>
<rect x="1182" y="820" width="1" height="4" fill="#000" />
<text x="1161.62" y="839.00" font-size="12" font-weight="bold" fill="#000" textLength="41.75" lengthAdjust="spacingAndGlyphs" >30000</text>
<rect x="1262" y="820" width="1" height="4" fill="#000" />
<text x="1241.62" y="839.00" font-size="12" font-weight="bold" fill="#000" textLength="41.75" lengthAdjust="spacingAndGlyphs" >35000</text>
<rect x="698" y="812" width="5" height="1" fill="#000" />
<text x="687.95" y="817.60" font-size="12" font-weight="bold" fill="#000" textLength="8.35" lengthAdjust="spacingAndGlyphs" >0</text>
<rect x="698" y="788" width="5" height="1" fill="#000" />
<text x="675.04" y="793.60" font-size="12" font-weight="bold" fill="#000" textLength="21.26" lengthAdjust="spacingAndGlyphs" >0.5</text>
<rect x="698" y="764" width="5" height="1" fill="#000" />
<text x="687.95" y="769.60" font-size="12" font-weight="bold" fill="#000" textLength="8.35" lengthAdjust="spacingAndGlyphs" >1</text>
<rect x="698" y="740" width="5" height="1" fill="#000" />
<text x="675.04" y="745.60" font-size="12" font-weight="bold" fill="#000" textLength="21.26" lengthAdjust="spacingAndGlyphs" >1.5</text>
<rect x="698" y="717" width="5" height="1" fill="#000" />
<text x="687.95" y="722.60" font-size="12" font-weight="bold" fill="#000" textLength="8.35" lengthAdjust="spacingAndGlyphs" >2</text>
<rect x="698" y="693" width="5" height="1" fill="#000" />
<text x="675.04" y="698.60" font-size="12" font-weight="bold" fill="#000" textLength="21.26" lengthAdjust="spacingAndGlyphs" >2.5</text>
<rect x="698" y="669" width="5" height="1" fill="#000" />
<text x="687.95" y="674.60" font-size="12" font-weight="bold" fill="#000" textLength="8.35" lengthAdjust="spacingAndGlyphs" >3</text>
<text x="968.56" y="858.00" font-size="12" font-weight="bold" fill="#000" textLength="41.89" lengthAdjust="spacingAndGlyphs" >Bunch</text>
<g transform="translate(667.6,743.5) rotate(-90)">
<text x="-34.09" y="0.00" font-size="12" font-weight="bold" fill="#000" textLength="68.18" lengthAdjust="spacingAndGlyphs" >Emittance</text>
</g>
<text x="709.80" y="750.00" font-size="12" font-weight="bold" fill="#000" textLength="32.40" lengthAdjust="spacingAndGlyphs" >Scan</text>
<rect x="54" y="915" width="577" height="151" fill="#ffffff" />
<rect x="134" y="915" width="1" height="150" fill="#c4c4c4" />
<rect x="215" y="915" width="1" height="150" fill="#c4c4c4" />
<rect x="295" y="915" width="1" height="150" fill="#c4c4c4" />
<rect x="376" y="915" width="1" height="150" fill="#c4c4c4" />
<rect x="457" y="915" width="1" height="150" fill="#c4c4c4" />
<rect x="538" y="915" width="1" height="150" fill="#c4c4c4" />
<rect x="618" y="915" width="1" height="150" fill="#c4c4c4" />
<rect x="54" y="1058" width="576" height="1" fill="#c4c4c4" />
<rect x="54" y="1036" width="576" height="1" fill="#c4c4c4" />
<rect x="54" y="1014" width="576" height="1" fill="#c4c4c4" />
<rect x="54" y="993" width="576" height="1" fill="#c4c4c4" />
<rect x="54" y="971" width="576" height="1" fill="#c4c4c4" />
<rect x="54" y="950" width="576" height="1" fill="#c4c4c4" />
<rect x="54" y="928" width="576" height="1" fill="#c4c4c4" />
<rect x="401" y="915" width="4" height="150" fill="#dcdcf0" />
<path d="M55.0 1058.4V1042.0H56.2V1042.0H57.5V1042.0H58.8V1042.0H60.0V1058.4ZM65.0 1058.4V1045.0H66.0V1045.0H67.0V1044.5H68.0V1044.0H69.0V1043.8H70.0V1043.2H71.0V1043.0H72.0V1043.0H73.0V1009.2H74.0V993.8H75.0V993.8H76.0V989.5H77.0V971.2H78.0V971.2H79.0V971.2H80.0V1058.4ZM83.0 1058.4V952.0H84.0V940.0H85.0V940.0H86.0V921.2H87.0V921.2H88.0V921.2H89.0V947.0H90.0V952.0H91.0V970.0H92.0V970.0H93.0V1027.0H94.0V1038.0H95.0V1043.0H96.0V1043.0H97.0V1043.0H98.0V1043.8H99.0V1044.0H100.0V1044.0H101.0V1044.0H102.0V1044.0H103.0V1044.0H104.0V1044.0H105.0V1058.4ZM107.0 1058.4V1045.0H108.0V1045.0H109.1V1045.0H110.1V1045.0H111.2V1044.5H112.2V1044.2H113.3V1044.2H114.3V1044.0H115.4V1044.0H116.4V1044.0H117.5V1044.0H118.5V1044.0H119.5V1044.0H120.6V1044.0H121.6V1043.8H122.7V1043.8H123.7V1043.5H124.8V1043.2H125.8V1043.2H126.9V1043.2H127.9V1043.2H129.0V1043.2H130.0V1058.4ZM132.0 1058.4V1043.8H133.0V1043.5H134.0V1043.2H135.0V1043.2H136.0V1043.2H137.0V1043.2H138.0V1043.2H139.0V1043.2H140.0V1044.0H141.0V1044.0H142.0V1043.5H143.0V1043.0H144.0V1042.5H145.0V1042.0H146.0V1042.5H147.0V1043.0H148.0V1043.5H149.0V1043.5H150.0V1043.8H151.0V1043.8H152.0V1043.8H153.0V1043.8H154.0V1058.4ZM157.0 1058.4V1044.2H158.0V1044.2H159.0V1044.2H160.0V1044.2H161.0V1044.2H162.0V1044.5H163.0V1045.0H164.0V1044.5H165.0V1044.0H166.0V1043.5H167.0V1043.0H168.0V1043.0H169.0V1043.5H170.0V1043.8H171.0V1044.0H172.0V1044.5H173.0V1045.0H174.0V1045.0H175.0V1045.0H176.0V1045.0H177.0V1045.0H178.0V1045.0H179.0V1058.4ZM182.0 1058.4V1044.2H183.0V1044.2H184.0V1044.2H185.0V1044.2H186.0V1044.2H187.0V1044.2H188.0V1044.2H189.0V1045.0H190.0V1044.5H191.0V1044.2H192.0V1044.2H193.0V1044.2H194.0V1044.2H195.0V1044.2H196.0V1044.2H197.0V1044.2H198.0V1044.2H199.0V1044.2H200.0V1044.2H201.0V1044.2H202.0V1044.2H203.0V1044.2H204.0V1058.4ZM209.0 1058.4V1045.0H210.0V1044.5H211.0V1044.2H212.0V1044.2H213.0V1044.2H214.0V1044.2H215.0V1044.2H216.0V1043.8H217.0V1043.2H218.0V1043.2H219.0V1043.8H220.0V1044.2H221.0V1044.2H222.0V1044.2H223.0V1044.2H224.0V1058.4ZM227.0 1058.4V1044.5H228.0V1044.5H229.0V1044.2H230.0V1044.2H231.0V1044.2H232.0V1042.5H233.0V1042.0H234.0V1042.0H235.0V1043.8H236.0V1044.2H237.0V1044.2H238.0V1044.2H239.0V1044.2H240.0V1044.2H241.0V1044.2H242.0V1043.8H243.0V1043.2H244.0V1043.2H245.0V1043.2H246.0V1043.8H247.0V1044.2H248.0V1044.2H249.0V1058.4ZM251.0 1058.4V1045.0H252.0V1044.8H253.0V1044.5H254.0V1044.2H255.0V1044.2H256.0V1044.2H257.0V1044.2H258.0V1044.2H259.0V1044.2H260.0V1044.2H261.0V1044.2H262.0V1044.2H263.0V1044.2H264.0V1044.2H265.0V1044.2H266.0V1044.2H267.0V1044.2H268.0V1044.2H269.0V1044.0H270.0V1043.5H271.0V1043.2H272.0V1043.2H273.0V1058.4ZM276.0 1058.4V1044.2H277.0V1044.2H278.0V1044.2H279.0V1044.2H280.0V1044.2H281.0V1044.2H282.0V1044.2H283.0V1044.2H284.0V1044.2H285.0V1044.2H286.0V1044.2H287.0V1044.2H288.0V1043.8H289.0V1043.2H290.0V1043.2H291.0V1043.8H292.0V1044.2H293.0V1044.2H294.0V1044.2H295.0V1044.2H296.0V1044.2H297.0V1044.2H298.0V1058.4ZM301.0 1058.4V1044.2H302.0V1044.2H303.0V1044.2H304.0V1044.2H305.0V1044.2H306.0V1044.2H307.0V1044.2H308.0V1044.2H309.0V1044.2H310.0V1044.2H311.0V1044.2H312.0V1044.2H313.0V1043.5H314.0V1043.2H315.0V1043.2H316.0V1043.2H317.0V1043.8H318.0V1044.2H319.0V1044.2H320.0V1044.2H321.0V1044.2H322.0V1044.2H323.0V1058.4ZM326.0 1058.4V1045.0H327.0V1044.5H328.0V1044.2H329.0V1044.2H330.0V1044.2H331.0V1044.0H332.0V1044.0H333.0V1044.0H334.0V1043.8H335.0V1043.8H336.0V1043.8H337.0V1043.8H338.0V1043.8H339.0V1043.2H340.0V1043.0H341.0V1043.0H342.0V1043.8H343.0V1044.0H344.0V1044.0H345.0V1044.0H346.0V1044.0H347.0V1044.0H348.0V1058.4ZM353.0 1058.4V1045.0H353.9V1044.5H354.9V1044.2H355.8V1044.0H356.8V1043.8H357.7V1043.5H358.6V1043.2H359.6V1043.0H360.5V1043.0H361.4V1043.0H362.4V1043.0H363.3V1043.5H364.2V1043.8H365.2V1044.0H366.1V1044.0H367.1V1044.0H368.0V1058.4ZM371.0 1058.4V1044.5H372.0V1044.5H373.1V1044.2H374.1V1044.2H375.2V1044.2H376.2V1044.0H377.3V1044.0H378.3V1044.0H379.4V1044.0H380.4V1044.0H381.5V1044.0H382.5V1044.0H383.5V1043.5H384.6V1043.0H385.6V1043.0H386.7V1043.8H387.7V1044.0H388.8V1044.0H389.8V1044.0H390.9V1044.0H391.9V1044.0H393.0V1044.0H394.0V1058.4ZM396.0 1058.4V1044.5H397.0V1044.2H398.0V1044.0H399.0V1043.8H400.0V1043.5H401.0V1043.2H402.0V1043.0H403.0V1043.0H404.0V1043.0H405.0V1043.0H406.0V1039.5H407.0V1039.2H408.0V1039.0H409.0V1038.8H410.0V1038.8H411.0V1038.5H412.0V1038.2H413.0V1038.2H414.0V1038.0H415.0V1038.0H416.0V1038.0H417.0V1038.0H418.0V1058.4ZM420.0 1058.4V1038.8H421.0V1038.8H422.0V1038.8H423.0V1038.5H424.0V1038.0H425.0V1038.0H426.0V1038.0H427.0V1037.8H428.0V1037.8H429.0V1037.5H430.0V1037.5H431.0V1037.2H432.0V1037.0H433.0V1037.0H434.0V1038.8H435.0V1036.8H436.0V1036.8H437.0V1036.8H438.0V1044.2H439.0V1044.2H440.0V1044.2H441.0V1044.2H442.0V1058.4ZM445.0 1058.4V1044.5H446.0V1044.5H447.1V1044.2H448.1V1044.2H449.2V1044.0H450.2V1043.8H451.3V1043.2H452.3V1043.0H453.4V1043.0H454.4V1043.0H455.5V1043.5H456.5V1043.8H457.5V1044.0H458.6V1044.0H459.6V1044.0H460.7V1044.0H461.7V1044.0H462.8V1044.0H463.8V1043.5H464.9V1043.0H465.9V1043.0H467.0V1043.0H468.0V1058.4ZM470.0 1058.4V1044.5H471.0V1044.5H472.1V1044.2H473.1V1044.2H474.2V1044.0H475.2V1043.8H476.3V1043.2H477.3V1043.0H478.4V1043.0H479.4V1043.8H480.5V1044.0H481.5V1044.0H482.5V1043.5H483.6V1043.0H484.6V1043.0H485.7V1043.8H486.7V1044.0H487.8V1043.0H488.8V1043.0H489.9V1043.0H490.9V1043.5H492.0V1043.5H493.0V1058.4ZM498.0 1058.4V1044.2H499.0V1044.2H500.0V1044.2H501.0V1044.2H502.0V1044.2H503.0V1044.2H504.0V1044.2H505.0V1044.2H506.0V1044.2H507.0V1044.2H508.0V1044.2H509.0V1044.2H510.0V1044.2H511.0V1044.2H512.0V1044.2H513.0V1058.4ZM515.0 1058.4V1044.2H516.0V1044.2H517.1V1044.0H518.1V1044.0H519.2V1043.8H520.2V1043.8H521.3V1043.5H522.3V1043.0H523.4V1043.0H524.4V1043.8H525.5V1044.0H526.5V1044.0H527.5V1044.0H528.6V1044.0H529.6V1044.0H530.7V1043.8H531.7V1043.8H532.8V1043.5H533.8V1043.2H534.9V1043.0H535.9V1043.0H537.0V1043.0H538.0V1058.4ZM540.0 1058.4V1044.2H541.0V1044.2H542.0V1044.2H543.0V1044.2H544.0V1044.2H545.0V1044.2H546.0V1044.2H547.0V1044.2H548.0V1044.2H549.0V1044.2H550.0V1044.2H551.0V1044.2H552.0V1044.2H553.0V1044.2H554.0V1044.2H555.0V1044.2H556.0V1044.2H557.0V1044.2H558.0V1044.2H559.0V1044.2H560.0V1044.2H561.0V1044.2H562.0V1058.4ZM565.0 1058.4V1044.2H566.0V1044.2H567.0V1044.2H568.0V1044.2H569.0V1044.2H570.0V1044.2H571.0V1044.2H572.0V1044.2H573.0V1044.2H574.0V1044.2H575.0V1044.2H576.0V1044.2H577.0V1044.5H578.0V1044.5H579.0V1044.2H580.0V1044.2H581.0V1045.0H582.0V1045.0H583.0V1045.0H584.0V1045.0H585.0V1045.0H586.0V1045.0H587.0V1058.4ZM589.0 1058.4V1045.5H590.0V1045.5H591.1V1045.5H592.1V1045.2H593.2V1045.2H594.2V1045.2H595.3V1045.2H596.3V1045.0H597.4V1045.0H598.4V1045.0H599.5V1045.0H600.5V1045.0H601.5V1045.0H602.6V1044.5H603.6V1044.0H604.7V1044.0H605.7V1044.5H606.8V1044.5H607.8V1044.0H608.9V1044.0H609.9V1044.0H611.0V1044.0H612.0V1058.4Z" fill="#0000ff" shape-rendering="crispEdges"/>
<rect x="401" y="915" width="1" height="150" fill="#00f000" />
<rect x="405" y="915" width="1" height="150" fill="#00f000" />
<rect x="54.5" y="915.5" width="576" height="150" fill="none" stroke="#000" stroke-width="1.15"/>
<rect x="134" y="1066" width="1" height="4" fill="#000" />
<text x="117.80" y="1085.00" font-size="12" font-weight="bold" fill="#000" textLength="33.40" lengthAdjust="spacingAndGlyphs" >5000</text>
<rect x="215" y="1066" width="1" height="4" fill="#000" />
<text x="194.62" y="1085.00" font-size="12" font-weight="bold" fill="#000" textLength="41.75" lengthAdjust="spacingAndGlyphs" >10000</text>
<rect x="295" y="1066" width="1" height="4" fill="#000" />
<text x="274.62" y="1085.00" font-size="12" font-weight="bold" fill="#000" textLength="41.75" lengthAdjust="spacingAndGlyphs" >15000</text>
<rect x="376" y="1066" width="1" height="4" fill="#000" />
<text x="355.62" y="1085.00" font-size="12" font-weight="bold" fill="#000" textLength="41.75" lengthAdjust="spacingAndGlyphs" >20000</text>
<rect x="457" y="1066" width="1" height="4" fill="#000" />
<text x="436.62" y="1085.00" font-size="12" font-weight="bold" fill="#000" textLength="41.75" lengthAdjust="spacingAndGlyphs" >25000</text>
<rect x="538" y="1066" width="1" height="4" fill="#000" />
<text x="517.62" y="1085.00" font-size="12" font-weight="bold" fill="#000" textLength="41.75" lengthAdjust="spacingAndGlyphs" >30000</text>
<rect x="618" y="1066" width="1" height="4" fill="#000" />
<text x="597.62" y="1085.00" font-size="12" font-weight="bold" fill="#000" textLength="41.75" lengthAdjust="spacingAndGlyphs" >35000</text>
<rect x="49" y="1058" width="5" height="1" fill="#000" />
<text x="37.65" y="1063.60" font-size="12" font-weight="bold" fill="#000" textLength="8.35" lengthAdjust="spacingAndGlyphs" >0</text>
<rect x="49" y="1036" width="5" height="1" fill="#000" />
<text x="37.65" y="1041.60" font-size="12" font-weight="bold" fill="#000" textLength="8.35" lengthAdjust="spacingAndGlyphs" >5</text>
<rect x="49" y="1014" width="5" height="1" fill="#000" />
<text x="29.30" y="1019.60" font-size="12" font-weight="bold" fill="#000" textLength="16.70" lengthAdjust="spacingAndGlyphs" >10</text>
<rect x="49" y="993" width="5" height="1" fill="#000" />
<text x="29.30" y="998.60" font-size="12" font-weight="bold" fill="#000" textLength="16.70" lengthAdjust="spacingAndGlyphs" >15</text>
<rect x="49" y="971" width="5" height="1" fill="#000" />
<text x="29.30" y="976.60" font-size="12" font-weight="bold" fill="#000" textLength="16.70" lengthAdjust="spacingAndGlyphs" >20</text>
<rect x="49" y="950" width="5" height="1" fill="#000" />
<text x="29.30" y="955.60" font-size="12" font-weight="bold" fill="#000" textLength="16.70" lengthAdjust="spacingAndGlyphs" >25</text>
<rect x="49" y="928" width="5" height="1" fill="#000" />
<text x="29.30" y="933.60" font-size="12" font-weight="bold" fill="#000" textLength="16.70" lengthAdjust="spacingAndGlyphs" >30</text>
<text x="322.56" y="1104.00" font-size="12" font-weight="bold" fill="#000" textLength="41.89" lengthAdjust="spacingAndGlyphs" >Bunch</text>
<g transform="translate(23.6,989.5) rotate(-90)">
<text x="-34.09" y="0.00" font-size="12" font-weight="bold" fill="#000" textLength="68.18" lengthAdjust="spacingAndGlyphs" >Emittance</text>
</g>
<text x="387.80" y="996.00" font-size="12" font-weight="bold" fill="#000" textLength="32.40" lengthAdjust="spacingAndGlyphs" >Scan</text>
<rect x="703" y="915" width="572" height="151" fill="#ffffff" />
<rect x="782" y="915" width="1" height="150" fill="#c4c4c4" />
<rect x="862" y="915" width="1" height="150" fill="#c4c4c4" />
<rect x="942" y="915" width="1" height="150" fill="#c4c4c4" />
<rect x="1022" y="915" width="1" height="150" fill="#c4c4c4" />
<rect x="1102" y="915" width="1" height="150" fill="#c4c4c4" />
<rect x="1182" y="915" width="1" height="150" fill="#c4c4c4" />
<rect x="1262" y="915" width="1" height="150" fill="#c4c4c4" />
<rect x="703" y="1058" width="571" height="1" fill="#c4c4c4" />
<rect x="703" y="1032" width="571" height="1" fill="#c4c4c4" />
<rect x="703" y="1006" width="571" height="1" fill="#c4c4c4" />
<rect x="703" y="980" width="571" height="1" fill="#c4c4c4" />
<rect x="703" y="954" width="571" height="1" fill="#c4c4c4" />
<rect x="703" y="928" width="571" height="1" fill="#c4c4c4" />
<rect x="724" y="915" width="2" height="150" fill="#dcdcf0" />
<path d="M704.0 1058.4V921.2H705.0V921.2H706.0V928.0H707.0V1058.4ZM714.0 1058.4V957.0H715.0V957.0H716.0V956.2H717.0V954.5H718.0V953.8H719.0V952.5H720.0V951.2H721.0V950.0H722.0V948.8H723.0V947.5H724.0V947.5H725.0V947.5H726.0V951.2H727.0V951.2H728.0V951.2H729.0V1058.4ZM731.0 1058.4V967.5H732.0V951.2H733.0V940.0H734.0V940.0H735.0V940.0H736.0V957.5H737.0V957.5H738.0V955.5H739.0V954.5H740.0V953.0H741.0V953.8H742.0V955.5H743.0V955.5H744.0V952.5H745.0V948.0H746.0V948.0H747.0V948.0H748.0V951.2H749.0V955.0H750.0V956.2H751.0V957.5H752.0V959.5H753.0V961.2H754.0V1058.4ZM756.0 1058.4V962.0H757.0V960.0H758.0V958.0H759.0V958.0H760.0V958.8H761.0V958.8H762.0V957.0H763.0V956.2H764.0V951.2H765.0V946.2H766.0V945.0H767.0V943.8H768.0V942.5H769.0V941.2H770.0V938.8H771.0V938.8H772.0V938.8H773.0V951.2H774.0V951.2H775.0V953.0H776.0V954.5H777.0V954.5H778.0V1058.4ZM780.0 1058.4V955.5H781.0V953.8H782.0V952.0H783.0V952.0H784.0V952.0H785.0V952.5H786.0V952.5H787.0V953.8H788.0V953.8H789.0V953.0H790.0V951.2H791.0V948.8H792.0V945.0H793.0V940.0H794.0V937.0H795.0V937.0H796.0V937.0H797.0V946.2H798.0V952.5H799.0V952.5H800.0V958.8H801.0V958.8H802.0V958.8H803.0V1058.4ZM805.0 1058.4V961.2H806.0V959.5H807.0V958.0H808.0V958.0H809.0V957.5H810.0V957.0H811.0V957.0H812.0V953.8H813.0V953.8H814.0V953.8H815.0V958.0H816.0V958.0H817.0V957.0H818.0V957.0H819.0V957.0H820.0V958.0H821.0V958.8H822.0V958.8H823.0V960.0H824.0V961.2H825.0V962.5H826.0V963.8H827.0V1058.4ZM830.0 1058.4V965.5H831.0V963.8H832.0V962.5H833.0V960.0H834.0V958.0H835.0V958.0H836.0V958.8H837.0V958.8H838.0V957.0H839.0V955.0H840.0V955.0H841.0V957.0H842.0V957.0H843.0V955.5H844.0V954.5H845.0V952.0H846.0V952.0H847.0V952.0H848.0V953.8H849.0V953.8H850.0V957.5H851.0V961.2H852.0V1058.4ZM857.0 1058.4V962.0H858.0V961.2H859.0V960.0H860.0V959.5H861.0V958.8H862.0V958.8H863.0V958.0H864.0V956.2H865.0V956.2H866.0V956.2H867.0V958.0H868.0V958.0H869.0V958.0H870.0V958.8H871.0V958.8H872.0V1058.4ZM874.0 1058.4V962.5H875.0V961.2H876.0V960.0H877.0V956.2H878.0V953.0H879.0V953.0H880.0V953.0H881.0V957.0H882.0V957.0H883.0V951.2H884.0V951.2H885.0V951.2H886.0V953.8H887.0V955.0H888.0V955.0H889.0V957.0H890.0V958.8H891.0V958.8H892.0V959.5H893.0V960.0H894.0V960.0H895.0V961.2H896.0V961.2H897.0V1058.4ZM899.0 1058.4V962.5H900.0V961.2H901.0V960.0H902.0V959.5H903.0V958.8H904.0V958.0H905.0V957.5H906.0V957.0H907.0V956.2H908.0V956.2H909.0V956.2H910.0V958.8H911.0V958.8H912.0V960.0H913.0V963.8H914.0V962.0H915.0V958.8H916.0V958.8H917.0V943.8H918.0V943.8H919.0V943.0H920.0V943.0H921.0V1058.4ZM923.0 1058.4V943.0H924.0V943.0H925.0V943.0H926.0V943.0H927.0V948.8H928.0V952.5H929.0V958.0H930.0V958.0H931.0V956.2H932.0V954.5H933.0V953.8H934.0V953.0H935.0V953.0H936.0V953.0H937.0V954.5H938.0V955.5H939.0V956.2H940.0V957.5H941.0V958.8H942.0V960.0H943.0V960.0H944.0V956.2H945.0V956.2H946.0V1058.4ZM948.0 1058.4V963.0H949.0V962.0H950.0V961.2H951.0V960.0H952.0V959.5H953.0V958.8H954.0V958.0H955.0V957.0H956.0V955.0H957.0V955.0H958.0V955.0H959.0V958.8H960.0V958.8H961.0V958.8H962.0V955.5H963.0V955.5H964.0V957.0H965.0V958.8H966.0V958.8H967.0V960.0H968.0V961.2H969.0V962.0H970.0V1058.4ZM974.0 1058.4V940.0H975.0V940.0H976.0V940.0H977.0V946.2H978.0V955.5H979.0V955.5H980.0V952.0H981.0V952.0H982.0V952.0H983.0V950.0H984.0V948.0H985.0V948.0H986.0V948.0H987.0V948.8H988.0V950.0H989.0V950.0H990.0V951.2H991.0V953.0H992.0V953.0H993.0V955.0H994.0V957.0H995.0V1058.4ZM1000.0 1058.4V962.5H1001.0V961.2H1002.0V959.5H1003.0V958.8H1004.0V957.5H1005.0V956.2H1006.0V955.5H1007.0V955.5H1008.0V955.5H1009.0V957.0H1010.0V958.8H1011.0V958.8H1012.0V960.0H1013.0V962.5H1014.0V962.5H1015.0V1058.4ZM1017.0 1058.4V965.0H1018.0V962.5H1019.0V957.0H1020.0V956.2H1021.0V956.2H1022.0V958.0H1023.0V958.0H1024.0V958.0H1025.0V957.5H1026.0V957.5H1027.0V957.5H1028.0V958.0H1029.0V958.0H1030.0V958.0H1031.0V958.8H1032.0V961.2H1033.0V965.5H1034.0V965.5H1035.0V967.0H1036.0V968.0H1037.0V970.0H1038.0V970.0H1039.0V970.0H1040.0V1058.4ZM1042.0 1058.4V966.2H1043.0V943.0H1044.0V943.0H1045.0V943.0H1046.0V947.5H1047.0V958.8H1048.0V958.8H1049.0V957.5H1050.0V956.2H1051.0V956.2H1052.0V957.0H1053.0V958.8H1054.0V958.8H1055.0V960.0H1056.0V965.0H1057.0V965.0H1058.0V962.5H1059.0V962.5H1060.0V961.2H1061.0V960.0H1062.0V960.0H1063.0V960.0H1064.0V1058.4ZM1066.0 1058.4V959.5H1067.0V958.8H1068.0V958.0H1069.0V957.0H1070.0V955.0H1071.0V953.0H1072.0V953.0H1073.0V953.0H1074.0V953.8H1075.0V955.5H1076.0V957.0H1077.0V957.0H1078.0V956.2H1079.0V955.5H1080.0V955.5H1081.0V956.2H1082.0V958.8H1083.0V960.0H1084.0V960.0H1085.0V961.2H1086.0V962.5H1087.0V962.5H1088.0V962.5H1089.0V1058.4ZM1091.0 1058.4V963.8H1092.0V962.5H1093.0V961.2H1094.0V960.0H1095.0V958.8H1096.0V957.5H1097.0V957.5H1098.0V957.5H1099.0V957.5H1100.0V958.0H1101.0V958.8H1102.0V960.0H1103.0V960.0H1104.0V960.5H1105.0V961.2H1106.0V962.5H1107.0V962.5H1108.0V962.5H1109.0V962.0H1110.0V961.2H1111.0V961.2H1112.0V961.2H1113.0V1058.4ZM1116.0 1058.4V963.8H1117.0V961.2H1118.0V957.5H1119.0V953.0H1120.0V953.0H1121.0V953.8H1122.0V955.0H1123.0V955.0H1124.0V956.2H1125.0V957.5H1126.0V957.5H1127.0V957.0H1128.0V956.2H1129.0V955.5H1130.0V955.5H1131.0V954.5H1132.0V951.2H1133.0V951.2H1134.0V951.2H1135.0V961.2H1136.0V961.2H1137.0V961.2H1138.0V1058.4ZM1143.0 1058.4V963.8H1144.0V963.0H1145.0V962.5H1146.0V959.5H1147.0V959.5H1148.0V959.5H1149.0V962.0H1150.0V963.0H1151.0V963.0H1152.0V962.5H1153.0V962.5H1154.0V963.0H1155.0V963.8H1156.0V965.5H1157.0V965.5H1158.0V1058.4ZM1160.0 1058.4V963.0H1161.0V963.0H1162.0V963.0H1163.0V963.0H1164.0V963.5H1165.0V963.8H1166.0V963.8H1167.0V963.8H1168.0V963.8H1169.0V963.8H1170.0V963.8H1171.0V962.5H1172.0V962.0H1173.0V962.0H1174.0V963.8H1175.0V964.5H1176.0V965.0H1177.0V965.5H1178.0V966.2H1179.0V966.2H1180.0V967.0H1181.0V968.0H1182.0V968.0H1183.0V1058.4ZM1185.0 1058.4V964.5H1186.0V964.5H1187.0V964.0H1188.0V963.8H1189.0V963.0H1190.0V962.5H1191.0V962.0H1192.0V961.2H1193.0V961.2H1194.0V962.0H1195.0V962.5H1196.0V962.5H1197.0V962.5H1198.0V961.2H1199.0V960.0H1200.0V960.0H1201.0V960.0H1202.0V960.0H1203.0V962.5H1204.0V962.5H1205.0V971.2H1206.0V972.5H1207.0V1058.4ZM1209.0 1058.4V968.8H1210.0V967.5H1211.0V966.2H1212.0V965.5H1213.0V963.8H1214.0V960.0H1215.0V951.2H1216.0V951.2H1217.0V951.2H1218.0V953.8H1219.0V963.8H1220.0V963.8H1221.0V962.5H1222.0V962.0H1223.0V962.0H1224.0V962.0H1225.0V962.5H1226.0V962.5H1227.0V962.5H1228.0V963.8H1229.0V966.2H1230.0V967.0H1231.0V967.0H1232.0V1058.4ZM1234.0 1058.4V953.8H1235.0V953.8H1236.0V953.0H1237.0V961.2H1238.0V961.2H1239.0V961.2H1240.0V960.0H1241.0V958.0H1242.0V958.0H1243.0V960.0H1244.0V962.0H1245.0V962.5H1246.0V963.0H1247.0V963.8H1248.0V963.8H1249.0V963.8H1250.0V964.5H1251.0V964.5H1252.0V964.5H1253.0V964.5H1254.0V964.5H1255.0V964.5H1256.0V1058.4Z" fill="#ff0000" shape-rendering="crispEdges"/>
<rect x="724" y="915" width="1" height="150" fill="#00f000" />
<rect x="726" y="915" width="1" height="150" fill="#00f000" />
<rect x="703.5" y="915.5" width="571" height="150" fill="none" stroke="#000" stroke-width="1.15"/>
<rect x="782" y="1066" width="1" height="4" fill="#000" />
<text x="765.80" y="1085.00" font-size="12" font-weight="bold" fill="#000" textLength="33.40" lengthAdjust="spacingAndGlyphs" >5000</text>
<rect x="862" y="1066" width="1" height="4" fill="#000" />
<text x="841.62" y="1085.00" font-size="12" font-weight="bold" fill="#000" textLength="41.75" lengthAdjust="spacingAndGlyphs" >10000</text>
<rect x="942" y="1066" width="1" height="4" fill="#000" />
<text x="921.62" y="1085.00" font-size="12" font-weight="bold" fill="#000" textLength="41.75" lengthAdjust="spacingAndGlyphs" >15000</text>
<rect x="1022" y="1066" width="1" height="4" fill="#000" />
<text x="1001.62" y="1085.00" font-size="12" font-weight="bold" fill="#000" textLength="41.75" lengthAdjust="spacingAndGlyphs" >20000</text>
<rect x="1102" y="1066" width="1" height="4" fill="#000" />
<text x="1081.62" y="1085.00" font-size="12" font-weight="bold" fill="#000" textLength="41.75" lengthAdjust="spacingAndGlyphs" >25000</text>
<rect x="1182" y="1066" width="1" height="4" fill="#000" />
<text x="1161.62" y="1085.00" font-size="12" font-weight="bold" fill="#000" textLength="41.75" lengthAdjust="spacingAndGlyphs" >30000</text>
<rect x="1262" y="1066" width="1" height="4" fill="#000" />
<text x="1241.62" y="1085.00" font-size="12" font-weight="bold" fill="#000" textLength="41.75" lengthAdjust="spacingAndGlyphs" >35000</text>
<rect x="698" y="1058" width="5" height="1" fill="#000" />
<text x="687.95" y="1063.60" font-size="12" font-weight="bold" fill="#000" textLength="8.35" lengthAdjust="spacingAndGlyphs" >0</text>
<rect x="698" y="1032" width="5" height="1" fill="#000" />
<text x="675.04" y="1037.60" font-size="12" font-weight="bold" fill="#000" textLength="21.26" lengthAdjust="spacingAndGlyphs" >0.5</text>
<rect x="698" y="1006" width="5" height="1" fill="#000" />
<text x="687.95" y="1011.60" font-size="12" font-weight="bold" fill="#000" textLength="8.35" lengthAdjust="spacingAndGlyphs" >1</text>
<rect x="698" y="980" width="5" height="1" fill="#000" />
<text x="675.04" y="985.60" font-size="12" font-weight="bold" fill="#000" textLength="21.26" lengthAdjust="spacingAndGlyphs" >1.5</text>
<rect x="698" y="954" width="5" height="1" fill="#000" />
<text x="687.95" y="959.60" font-size="12" font-weight="bold" fill="#000" textLength="8.35" lengthAdjust="spacingAndGlyphs" >2</text>
<rect x="698" y="928" width="5" height="1" fill="#000" />
<text x="675.04" y="933.60" font-size="12" font-weight="bold" fill="#000" textLength="21.26" lengthAdjust="spacingAndGlyphs" >2.5</text>
<text x="968.56" y="1104.00" font-size="12" font-weight="bold" fill="#000" textLength="41.89" lengthAdjust="spacingAndGlyphs" >Bunch</text>
<g transform="translate(667.6,989.5) rotate(-90)">
<text x="-34.09" y="0.00" font-size="12" font-weight="bold" fill="#000" textLength="68.18" lengthAdjust="spacingAndGlyphs" >Emittance</text>
</g>
<text x="709.80" y="996.00" font-size="12" font-weight="bold" fill="#000" textLength="32.40" lengthAdjust="spacingAndGlyphs" >Scan</text>
<rect x="60" y="1113" width="114" height="25" fill="#7b92b0" />
<rect x="61" y="1114" width="112" height="23" fill="url(#gBtn)" />
<text x="77.25" y="1130.00" font-size="12" font-weight="bold" fill="#2b2b2b" textLength="79.50" lengthAdjust="spacingAndGlyphs" >HISTORY B1</text>
<rect x="179" y="1113" width="131" height="25" fill="#7b92b0" />
<rect x="180" y="1114" width="129" height="23" fill="url(#gBtn)" />
<text x="196.50" y="1130.00" font-size="12" font-weight="bold" fill="#2b2b2b" textLength="96.00" lengthAdjust="spacingAndGlyphs" >RESCALING B1</text>
<rect x="315" y="1113" width="68" height="24" fill="#7b92b0" />
<rect x="316" y="1114" width="47" height="22" fill="#c8d7e8" />
<rect x="317" y="1115" width="46" height="21" fill="#eeeeee" />
<rect x="364" y="1114" width="18" height="22" fill="url(#gBtn)" />
<path d="M368 1123 H378 L373 1128 Z" fill="#333"/>
<text x="319.00" y="1129.00" font-size="12" font-weight="bold" fill="#2b2b2b" textLength="8.35" lengthAdjust="spacingAndGlyphs" >1</text>
<rect x="388" y="1113" width="133" height="25" fill="#7b92b0" />
<rect x="389" y="1114" width="131" height="23" fill="url(#gBtn)" />
<text x="404.85" y="1130.00" font-size="12" font-weight="bold" fill="#2b2b2b" textLength="99.30" lengthAdjust="spacingAndGlyphs" >Bunch/time B1</text>
<rect x="530" y="1119" width="13" height="13" fill="#a0a0a0" />
<rect x="531" y="1120" width="11" height="11" fill="#eeeeee" />
<text x="547.00" y="1130.00" font-size="12" font-weight="bold" fill="#999999" textLength="44.00" lengthAdjust="spacingAndGlyphs" >Diff B1</text>
<rect x="704" y="1113" width="114" height="25" fill="#7b92b0" />
<rect x="705" y="1114" width="112" height="23" fill="url(#gBtn)" />
<text x="721.25" y="1130.00" font-size="12" font-weight="bold" fill="#2b2b2b" textLength="79.50" lengthAdjust="spacingAndGlyphs" >HISTORY B2</text>
<rect x="823" y="1113" width="131" height="25" fill="#7b92b0" />
<rect x="824" y="1114" width="129" height="23" fill="url(#gBtn)" />
<text x="840.50" y="1130.00" font-size="12" font-weight="bold" fill="#2b2b2b" textLength="96.00" lengthAdjust="spacingAndGlyphs" >RESCALING B2</text>
<rect x="959" y="1113" width="68" height="24" fill="#7b92b0" />
<rect x="960" y="1114" width="47" height="22" fill="#c8d7e8" />
<rect x="961" y="1115" width="46" height="21" fill="#eeeeee" />
<rect x="1008" y="1114" width="18" height="22" fill="url(#gBtn)" />
<path d="M1012 1123 H1022 L1017 1128 Z" fill="#333"/>
<text x="963.00" y="1129.00" font-size="12" font-weight="bold" fill="#2b2b2b" textLength="8.35" lengthAdjust="spacingAndGlyphs" >1</text>
<rect x="1032" y="1113" width="133" height="25" fill="#7b92b0" />
<rect x="1033" y="1114" width="131" height="23" fill="url(#gBtn)" />
<text x="1048.85" y="1130.00" font-size="12" font-weight="bold" fill="#2b2b2b" textLength="99.30" lengthAdjust="spacingAndGlyphs" >Bunch/time B2</text>
<rect x="1174" y="1119" width="13" height="13" fill="#a0a0a0" />
<rect x="1175" y="1120" width="11" height="11" fill="#eeeeee" />
<text x="1191.00" y="1130.00" font-size="12" font-weight="bold" fill="#999999" textLength="44.00" lengthAdjust="spacingAndGlyphs" >Diff B2</text>
<rect x="342" y="1168" width="125" height="25" fill="#9a9a9a" />
<rect x="343" y="1169" width="123" height="23" fill="#eeeeee" />
<text x="387.50" y="1185.00" font-size="12" font-weight="bold" fill="#999999" textLength="53.30" lengthAdjust="spacingAndGlyphs" >Acquire</text>
<path d="M369 1172.3 L381.6 1179.9 L369 1187.5 Z" fill="#c6c6c6" stroke="#b0b0b0" stroke-width="0.6"/>
<rect x="472" y="1168" width="175" height="25" fill="#9a9a9a" />
<rect x="473" y="1169" width="173" height="23" fill="#eeeeee" />
<text x="511.00" y="1185.00" font-size="12" font-weight="bold" fill="#999999" textLength="117.00" lengthAdjust="spacingAndGlyphs" >Start Monitoring</text>
<path d="M491 1173 L499.5 1180 L491 1187 Z M497.5 1173 L506.5 1180 L497.5 1187 Z" fill="#c6c6c6" stroke="#b0b0b0" stroke-width="0.6"/>
<rect x="652" y="1168" width="100" height="25" fill="#7b92b0" />
<rect x="653" y="1169" width="98" height="23" fill="url(#gBtn)" />
<text x="695.70" y="1185.00" font-size="12" font-weight="bold" fill="#2b2b2b" textLength="33.00" lengthAdjust="spacingAndGlyphs" >Stop</text>
<path d="M680.3 1172.6 h6.4 l4.5 4.5 v6.4 l-4.5 4.5 h-6.4 l-4.5 -4.5 v-6.4 Z" fill="#fb0007"/>
<text x="677.00" y="1183.40" font-size="7" font-weight="bold" fill="#fff" textLength="13.40" lengthAdjust="spacingAndGlyphs" >STOP</text>
<rect x="757" y="1168" width="200" height="25" fill="#7b92b0" />
<rect x="758" y="1169" width="198" height="23" fill="url(#gBtn)" />
<text x="808.00" y="1185.00" font-size="12" font-weight="bold" fill="#2b2b2b" textLength="123.00" lengthAdjust="spacingAndGlyphs" >Save to elogbook</text>
<g transform="translate(784,1169)"><path d="M0.5 6.5 H3 V5 H6 V6.5 H14 V5 H17 V6.5 H19.5 V18.2 H0.5 Z" fill="#111"/><rect x="2" y="7.6" width="16" height="7.6" fill="#d8d8d8"/><rect x="2" y="7.6" width="3" height="7.6" fill="#f4f4f4"/><rect x="15" y="7.6" width="3" height="7.6" fill="#f4f4f4"/><rect x="1.8" y="15.6" width="16.4" height="1.5" fill="#ffffff"/><circle cx="10" cy="12" r="5.3" fill="#0c0c0c"/><circle cx="10" cy="12" r="3.4" fill="#0a6a78"/><path d="M10 12 L13.3 10.2 A3.6 3.6 0 0 1 8.3 15.1 Z" fill="#8a24c8"/><circle cx="8.7" cy="10.8" r="1.5" fill="#10e0e0"/><circle cx="10.3" cy="12.3" r="0.9" fill="#0c0c0c"/><ellipse cx="10" cy="3.4" rx="8.8" ry="2.3" fill="#ffb400"/><path d="M5.5 3.5 L14.5 3.5 L10.8 7.4 L9.2 7.4 Z" fill="#ffe14a"/><ellipse cx="10" cy="2.6" rx="5.6" ry="1.9" fill="#ffd21e"/><ellipse cx="10" cy="3.4" rx="2.6" ry="2.6" fill="#ffffff"/></g>
<rect x="5" y="1220" width="1130" height="25" fill="#ffffff" />
<rect x="5" y="1220" width="1128" height="23" fill="#808080" />
<rect x="7" y="1222" width="1126" height="21" fill="#eeeeee" />
<rect x="6" y="1221" width="1127" height="1" fill="#8c8c8c" />
<rect x="6" y="1221" width="1" height="22" fill="#8c8c8c" />
<text x="12.50" y="1237.00" font-size="17" font-weight="bold" fill="#0b4da2" textLength="5.50" lengthAdjust="spacingAndGlyphs" style="font-family:'Liberation Serif',serif">i</text>
<text x="28.00" y="1236.00" font-size="11" font-style="italic" fill="#333" textLength="349.50" lengthAdjust="spacingAndGlyphs" xml:space="preserve">17:30:31 [BsrtHistory&#160;&#160;&#160;&#160;&#160;] Data removed is :09/09/24 10:36:20</text>
<rect x="1260" y="1222" width="30" height="20" fill="url(#gBtn)" />
<path d="M1272 1234 L1276.5 1229 L1281 1234 Z" fill="#000"/></svg></body></html>
